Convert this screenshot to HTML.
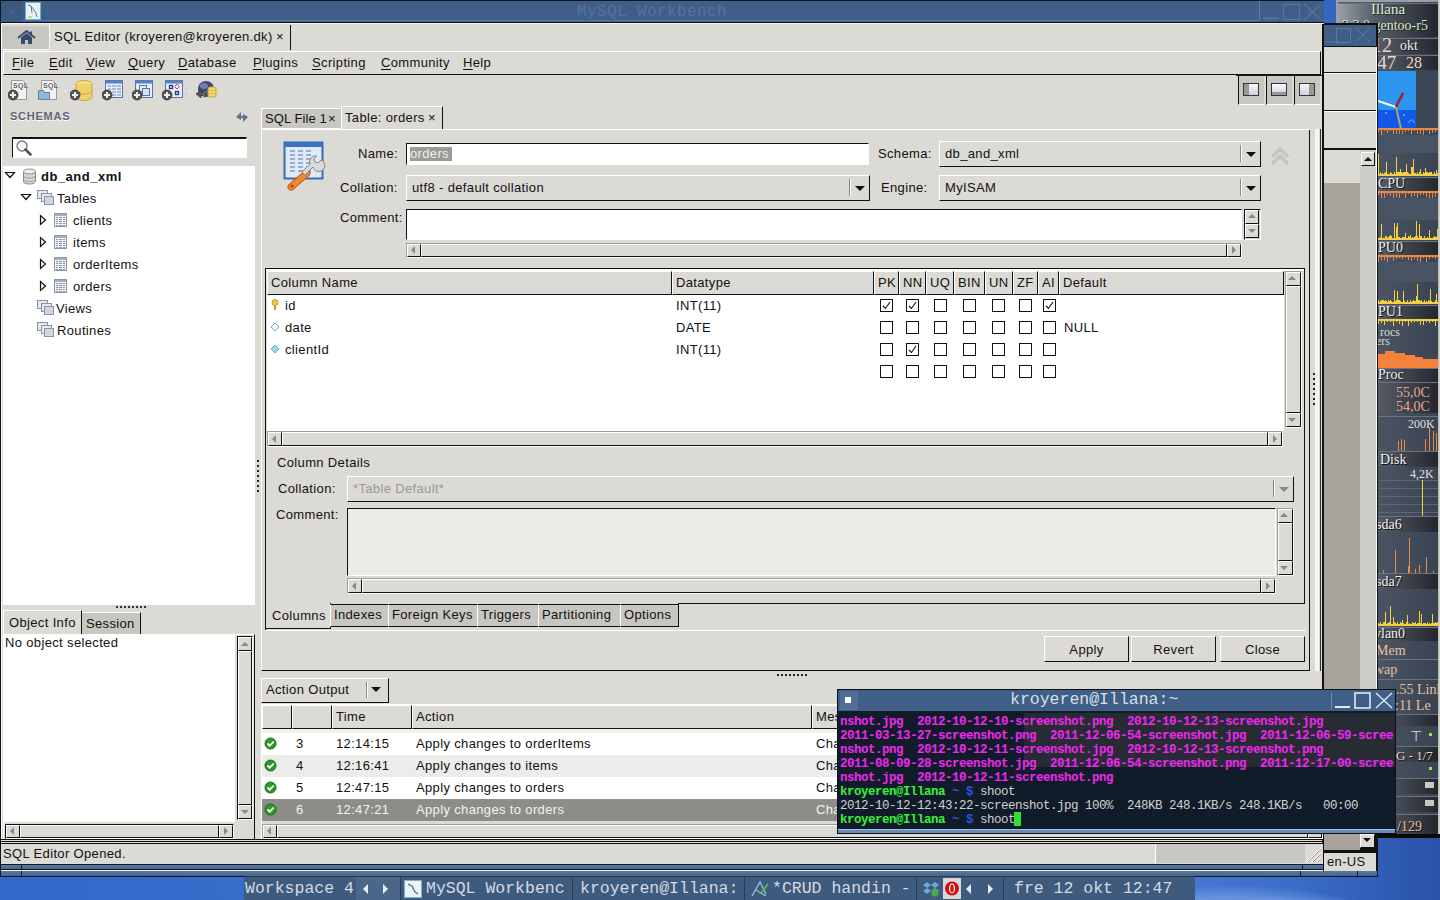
<!DOCTYPE html>
<html><head><meta charset="utf-8">
<style>
*{box-sizing:border-box;margin:0;padding:0}
html,body{width:1440px;height:900px;overflow:hidden;background:#3b6ac4;font-family:"Liberation Sans",sans-serif;font-size:13px;color:#111;letter-spacing:.35px}
.a{position:absolute}
.t{position:absolute;white-space:pre}
u{text-decoration:none;border-bottom:1px solid #111;display:inline-block;line-height:11px}
</style></head><body>

<div class="a" style="left:0px;top:0px;width:1440px;height:900px;background:radial-gradient(ellipse 230px 90px at 1230px 975px,rgba(120,160,230,.0) 70%,rgba(130,170,235,.6) 85%,rgba(120,160,230,0) 100%),linear-gradient(90deg,#3468c8 0%,#3f72d0 40%,#4a7ad4 80%,#3a6cc8 90%,#2a52a8 100%);"></div>
<div class="a" style="left:1336px;top:0px;width:104px;height:838px;background:#9aa0a8;"></div>
<div class="a" style="left:1338px;top:2px;width:100px;height:834px;background:linear-gradient(90deg,#56606e,#3a4352);"></div>
<div class="a" style="left:1438px;top:0px;width:1px;height:838px;background:#c0c0b8;"></div>
<div class="a" style="left:1439px;top:0px;width:1px;height:838px;background:#d0d0c8;"></div>
<div class="a" style="left:1336px;top:834px;width:104px;height:4px;background:#0a0a0a;"></div>
<div class="a" style="left:1338px;top:3px;width:100px;height:34px;background:linear-gradient(90deg,#9aa0a8 0%,#5a606c 35%,#24272e 100%);border-top:1px solid #6a7280"></div>
<div class="t" style="left:1371px;top:2px;font-size:15px;color:#d8f0d0;letter-spacing:0px;font-family:'Liberation Serif',serif;line-height:15px;text-shadow:1px 1px 0 #222">Illana</div>
<div class="t" style="left:1342px;top:19px;font-size:14px;color:#d0e8c8;letter-spacing:0px;font-family:'Liberation Serif',serif;line-height:14px;text-shadow:1px 1px 0 #222">3.3.0.gentoo-r5</div>
<div class="a" style="left:1338px;top:38px;width:100px;height:16px;background:linear-gradient(90deg,#9aa0a8 0%,#5a606c 35%,#24272e 100%);border-top:1px solid #6a7280"></div>
<div class="t" style="left:1372px;top:35px;font-size:20px;color:#e8dcc0;letter-spacing:0px;font-family:'Liberation Serif',serif;line-height:20px;">12</div>
<div class="t" style="left:1400px;top:39px;font-size:14px;color:#f0f0f0;letter-spacing:0px;font-family:'Liberation Serif',serif;line-height:14px;text-shadow:1px 1px 0 #111">okt</div>
<div class="a" style="left:1338px;top:55px;width:100px;height:15px;background:linear-gradient(90deg,#9aa0a8 0%,#5a606c 35%,#24272e 100%);border-top:1px solid #6a7280"></div>
<div class="t" style="left:1372px;top:53px;font-size:19px;color:#e8dcc0;letter-spacing:0px;font-family:'Liberation Serif',serif;line-height:19px;">:47</div>
<div class="t" style="left:1406px;top:55px;font-size:16px;color:#e8dcc0;letter-spacing:0px;font-family:'Liberation Serif',serif;line-height:16px;">28</div>
<div class="a" style="left:1378px;top:71px;width:38px;height:40px;background:#2b95f0;"></div>
<div class="a" style="left:1378px;top:110px;width:38px;height:18px;background:#1258e8;"></div>
<div class="a" style="left:1416px;top:71px;width:22px;height:57px;background:#3a4656;"></div>
<svg class="a" style="left:1378px;top:71px" width="38" height="57" viewBox="0 0 38 57"><path d="M0 30l18 6" stroke="#fff" stroke-width="2"/><path d="M18 36l7-14" stroke="#a02030" stroke-width="2.5"/><path d="M18 36l5 22" stroke="#b0a070" stroke-width="2"/><circle cx="8" cy="42" r="1" fill="#7ab0ff"/><circle cx="26" cy="44" r="1" fill="#7ab0ff"/><path d="M30 52c2-4 6-4 6 0" stroke="#6ac0ff" fill="none"/></svg>
<svg class="a" style="left:1378px;top:128px" width="60" height="7" viewBox="0 0 60 7"><rect x="0" y="0" width="60" height="2" fill="#e88a48"/><rect x="0" y="2" width="1" height="2" fill="#e88a48"/><rect x="3" y="2" width="1" height="5" fill="#e88a48"/><rect x="6" y="2" width="1" height="1" fill="#e88a48"/><rect x="9" y="2" width="1" height="3" fill="#e88a48"/><rect x="12" y="2" width="1" height="1" fill="#e88a48"/><rect x="15" y="2" width="1" height="4" fill="#e88a48"/><rect x="18" y="2" width="1" height="4" fill="#e88a48"/><rect x="21" y="2" width="1" height="4" fill="#e88a48"/><rect x="24" y="2" width="1" height="4" fill="#e88a48"/><rect x="27" y="2" width="1" height="2" fill="#e88a48"/><rect x="30" y="2" width="1" height="1" fill="#e88a48"/><rect x="33" y="2" width="1" height="4" fill="#e88a48"/><rect x="36" y="2" width="1" height="1" fill="#e88a48"/><rect x="39" y="2" width="1" height="4" fill="#e88a48"/><rect x="42" y="2" width="1" height="4" fill="#e88a48"/><rect x="45" y="2" width="1" height="5" fill="#e88a48"/><rect x="48" y="2" width="1" height="1" fill="#e88a48"/><rect x="51" y="2" width="1" height="4" fill="#e88a48"/><rect x="54" y="2" width="1" height="3" fill="#e88a48"/><rect x="57" y="2" width="1" height="2" fill="#e88a48"/></svg>
<div class="a" style="left:1378px;top:135px;width:60px;height:18px;background:#485464;"></div>
<svg class="a" style="left:1378px;top:153px" width="60" height="23" viewBox="0 0 60 23"><rect x="0" y="1" width="1" height="22" fill="#f4d040"/><rect x="1" y="21" width="1" height="2" fill="#f4d040"/><rect x="2" y="19" width="1" height="4" fill="#f4d040"/><rect x="3" y="21" width="1" height="2" fill="#f4d040"/><rect x="4" y="20" width="1" height="3" fill="#f4d040"/><rect x="5" y="21" width="1" height="2" fill="#f4d040"/><rect x="6" y="20" width="1" height="3" fill="#f4d040"/><rect x="7" y="19" width="1" height="4" fill="#f4d040"/><rect x="8" y="9" width="1" height="14" fill="#f4d040"/><rect x="9" y="21" width="1" height="2" fill="#f4d040"/><rect x="10" y="21" width="1" height="2" fill="#f4d040"/><rect x="11" y="21" width="1" height="2" fill="#f4d040"/><rect x="12" y="19" width="1" height="4" fill="#f4d040"/><rect x="13" y="20" width="1" height="3" fill="#f4d040"/><rect x="14" y="21" width="1" height="2" fill="#f4d040"/><rect x="15" y="21" width="1" height="2" fill="#f4d040"/><rect x="16" y="19" width="1" height="4" fill="#f4d040"/><rect x="17" y="21" width="1" height="2" fill="#f4d040"/><rect x="18" y="4" width="1" height="19" fill="#f4d040"/><rect x="19" y="19" width="1" height="4" fill="#f4d040"/><rect x="20" y="19" width="1" height="4" fill="#f4d040"/><rect x="21" y="19" width="1" height="4" fill="#f4d040"/><rect x="22" y="16" width="1" height="7" fill="#f4d040"/><rect x="23" y="19" width="1" height="4" fill="#f4d040"/><rect x="24" y="20" width="1" height="3" fill="#f4d040"/><rect x="25" y="19" width="1" height="4" fill="#f4d040"/><rect x="26" y="19" width="1" height="4" fill="#f4d040"/><rect x="27" y="19" width="1" height="4" fill="#f4d040"/><rect x="28" y="11" width="1" height="12" fill="#f4d040"/><rect x="29" y="19" width="1" height="4" fill="#f4d040"/><rect x="30" y="20" width="1" height="3" fill="#f4d040"/><rect x="31" y="21" width="1" height="2" fill="#f4d040"/><rect x="32" y="21" width="1" height="2" fill="#f4d040"/><rect x="33" y="14" width="1" height="9" fill="#f4d040"/><rect x="34" y="14" width="1" height="9" fill="#f4d040"/><rect x="35" y="6" width="1" height="17" fill="#f4d040"/><rect x="36" y="20" width="1" height="3" fill="#f4d040"/><rect x="37" y="20" width="1" height="3" fill="#f4d040"/><rect x="38" y="21" width="1" height="2" fill="#f4d040"/><rect x="39" y="19" width="1" height="4" fill="#f4d040"/><rect x="40" y="21" width="1" height="2" fill="#f4d040"/><rect x="41" y="19" width="1" height="4" fill="#f4d040"/><rect x="42" y="16" width="1" height="7" fill="#f4d040"/><rect x="43" y="21" width="1" height="2" fill="#f4d040"/><rect x="44" y="21" width="1" height="2" fill="#f4d040"/><rect x="45" y="19" width="1" height="4" fill="#f4d040"/><rect x="46" y="20" width="1" height="3" fill="#f4d040"/><rect x="47" y="15" width="1" height="8" fill="#f4d040"/><rect x="48" y="19" width="1" height="4" fill="#f4d040"/><rect x="49" y="19" width="1" height="4" fill="#f4d040"/><rect x="50" y="20" width="1" height="3" fill="#f4d040"/><rect x="51" y="19" width="1" height="4" fill="#f4d040"/><rect x="52" y="19" width="1" height="4" fill="#f4d040"/><rect x="53" y="19" width="1" height="4" fill="#f4d040"/><rect x="54" y="21" width="1" height="2" fill="#f4d040"/><rect x="55" y="21" width="1" height="2" fill="#f4d040"/><rect x="56" y="19" width="1" height="4" fill="#f4d040"/><rect x="57" y="21" width="1" height="2" fill="#f4d040"/><rect x="58" y="17" width="1" height="6" fill="#f4d040"/><rect x="59" y="20" width="1" height="3" fill="#f4d040"/></svg>
<div class="a" style="left:1338px;top:177px;width:100px;height:14px;background:linear-gradient(90deg,#9aa0a8 0%,#5a606c 35%,#24272e 100%);border-top:1px solid #6a7280"></div>
<div class="t" style="left:1378px;top:177px;font-size:14px;color:#f0f0f0;letter-spacing:0px;font-family:'Liberation Serif',serif;line-height:14px;text-shadow:1px 1px 0 #111">CPU</div>
<svg class="a" style="left:1378px;top:191px" width="60" height="7" viewBox="0 0 60 7"><rect x="0" y="0" width="60" height="2" fill="#e88a48"/><rect x="0" y="2" width="1" height="2" fill="#e88a48"/><rect x="3" y="2" width="1" height="5" fill="#e88a48"/><rect x="6" y="2" width="1" height="5" fill="#e88a48"/><rect x="9" y="2" width="1" height="2" fill="#e88a48"/><rect x="12" y="2" width="1" height="3" fill="#e88a48"/><rect x="15" y="2" width="1" height="5" fill="#e88a48"/><rect x="18" y="2" width="1" height="4" fill="#e88a48"/><rect x="21" y="2" width="1" height="5" fill="#e88a48"/><rect x="24" y="2" width="1" height="1" fill="#e88a48"/><rect x="27" y="2" width="1" height="5" fill="#e88a48"/><rect x="30" y="2" width="1" height="1" fill="#e88a48"/><rect x="33" y="2" width="1" height="4" fill="#e88a48"/><rect x="36" y="2" width="1" height="3" fill="#e88a48"/><rect x="39" y="2" width="1" height="5" fill="#e88a48"/><rect x="42" y="2" width="1" height="2" fill="#e88a48"/><rect x="45" y="2" width="1" height="2" fill="#e88a48"/><rect x="48" y="2" width="1" height="4" fill="#e88a48"/><rect x="51" y="2" width="1" height="5" fill="#e88a48"/><rect x="54" y="2" width="1" height="5" fill="#e88a48"/><rect x="57" y="2" width="1" height="4" fill="#e88a48"/></svg>
<div class="a" style="left:1378px;top:198px;width:60px;height:22px;background:#485464;"></div>
<svg class="a" style="left:1378px;top:220px" width="60" height="20" viewBox="0 0 60 20"><rect x="0" y="18" width="1" height="2" fill="#f4d040"/><rect x="1" y="18" width="1" height="2" fill="#f4d040"/><rect x="2" y="17" width="1" height="3" fill="#f4d040"/><rect x="3" y="4" width="1" height="16" fill="#f4d040"/><rect x="4" y="18" width="1" height="2" fill="#f4d040"/><rect x="5" y="18" width="1" height="2" fill="#f4d040"/><rect x="6" y="18" width="1" height="2" fill="#f4d040"/><rect x="7" y="16" width="1" height="4" fill="#f4d040"/><rect x="8" y="16" width="1" height="4" fill="#f4d040"/><rect x="9" y="18" width="1" height="2" fill="#f4d040"/><rect x="10" y="17" width="1" height="3" fill="#f4d040"/><rect x="11" y="16" width="1" height="4" fill="#f4d040"/><rect x="12" y="15" width="1" height="5" fill="#f4d040"/><rect x="13" y="16" width="1" height="4" fill="#f4d040"/><rect x="14" y="18" width="1" height="2" fill="#f4d040"/><rect x="15" y="18" width="1" height="2" fill="#f4d040"/><rect x="16" y="3" width="1" height="17" fill="#f4d040"/><rect x="17" y="18" width="1" height="2" fill="#f4d040"/><rect x="18" y="7" width="1" height="13" fill="#f4d040"/><rect x="19" y="3" width="1" height="17" fill="#f4d040"/><rect x="20" y="17" width="1" height="3" fill="#f4d040"/><rect x="21" y="17" width="1" height="3" fill="#f4d040"/><rect x="22" y="18" width="1" height="2" fill="#f4d040"/><rect x="23" y="18" width="1" height="2" fill="#f4d040"/><rect x="24" y="17" width="1" height="3" fill="#f4d040"/><rect x="25" y="17" width="1" height="3" fill="#f4d040"/><rect x="26" y="17" width="1" height="3" fill="#f4d040"/><rect x="27" y="13" width="1" height="7" fill="#f4d040"/><rect x="28" y="18" width="1" height="2" fill="#f4d040"/><rect x="29" y="18" width="1" height="2" fill="#f4d040"/><rect x="30" y="16" width="1" height="4" fill="#f4d040"/><rect x="31" y="17" width="1" height="3" fill="#f4d040"/><rect x="32" y="15" width="1" height="5" fill="#f4d040"/><rect x="33" y="18" width="1" height="2" fill="#f4d040"/><rect x="34" y="17" width="1" height="3" fill="#f4d040"/><rect x="35" y="18" width="1" height="2" fill="#f4d040"/><rect x="36" y="17" width="1" height="3" fill="#f4d040"/><rect x="37" y="16" width="1" height="4" fill="#f4d040"/><rect x="38" y="1" width="1" height="19" fill="#f4d040"/><rect x="39" y="16" width="1" height="4" fill="#f4d040"/><rect x="40" y="18" width="1" height="2" fill="#f4d040"/><rect x="41" y="4" width="1" height="16" fill="#f4d040"/><rect x="42" y="16" width="1" height="4" fill="#f4d040"/><rect x="43" y="16" width="1" height="4" fill="#f4d040"/><rect x="44" y="18" width="1" height="2" fill="#f4d040"/><rect x="45" y="18" width="1" height="2" fill="#f4d040"/><rect x="46" y="16" width="1" height="4" fill="#f4d040"/><rect x="47" y="18" width="1" height="2" fill="#f4d040"/><rect x="48" y="18" width="1" height="2" fill="#f4d040"/><rect x="49" y="17" width="1" height="3" fill="#f4d040"/><rect x="50" y="18" width="1" height="2" fill="#f4d040"/><rect x="51" y="10" width="1" height="10" fill="#f4d040"/><rect x="52" y="18" width="1" height="2" fill="#f4d040"/><rect x="53" y="18" width="1" height="2" fill="#f4d040"/><rect x="54" y="18" width="1" height="2" fill="#f4d040"/><rect x="55" y="17" width="1" height="3" fill="#f4d040"/><rect x="56" y="16" width="1" height="4" fill="#f4d040"/><rect x="57" y="17" width="1" height="3" fill="#f4d040"/><rect x="58" y="17" width="1" height="3" fill="#f4d040"/><rect x="59" y="9" width="1" height="11" fill="#f4d040"/></svg>
<div class="a" style="left:1338px;top:241px;width:100px;height:14px;background:linear-gradient(90deg,#9aa0a8 0%,#5a606c 35%,#24272e 100%);border-top:1px solid #6a7280"></div>
<div class="t" style="left:1378px;top:241px;font-size:14px;color:#f0f0f0;letter-spacing:0px;font-family:'Liberation Serif',serif;line-height:14px;text-shadow:1px 1px 0 #111">PU0</div>
<svg class="a" style="left:1378px;top:255px" width="60" height="7" viewBox="0 0 60 7"><rect x="0" y="0" width="60" height="2" fill="#e88a48"/><rect x="0" y="2" width="1" height="5" fill="#e88a48"/><rect x="3" y="2" width="1" height="3" fill="#e88a48"/><rect x="6" y="2" width="1" height="3" fill="#e88a48"/><rect x="9" y="2" width="1" height="5" fill="#e88a48"/><rect x="12" y="2" width="1" height="1" fill="#e88a48"/><rect x="15" y="2" width="1" height="4" fill="#e88a48"/><rect x="18" y="2" width="1" height="2" fill="#e88a48"/><rect x="21" y="2" width="1" height="1" fill="#e88a48"/><rect x="24" y="2" width="1" height="2" fill="#e88a48"/><rect x="27" y="2" width="1" height="1" fill="#e88a48"/><rect x="30" y="2" width="1" height="3" fill="#e88a48"/><rect x="33" y="2" width="1" height="4" fill="#e88a48"/><rect x="36" y="2" width="1" height="2" fill="#e88a48"/><rect x="39" y="2" width="1" height="4" fill="#e88a48"/><rect x="42" y="2" width="1" height="5" fill="#e88a48"/><rect x="45" y="2" width="1" height="1" fill="#e88a48"/><rect x="48" y="2" width="1" height="5" fill="#e88a48"/><rect x="51" y="2" width="1" height="2" fill="#e88a48"/><rect x="54" y="2" width="1" height="1" fill="#e88a48"/><rect x="57" y="2" width="1" height="2" fill="#e88a48"/></svg>
<div class="a" style="left:1378px;top:262px;width:60px;height:20px;background:#485464;"></div>
<svg class="a" style="left:1378px;top:282px" width="60" height="22" viewBox="0 0 60 22"><rect x="0" y="18" width="1" height="4" fill="#f4d040"/><rect x="1" y="20" width="1" height="2" fill="#f4d040"/><rect x="2" y="19" width="1" height="3" fill="#f4d040"/><rect x="3" y="18" width="1" height="4" fill="#f4d040"/><rect x="4" y="18" width="1" height="4" fill="#f4d040"/><rect x="5" y="18" width="1" height="4" fill="#f4d040"/><rect x="6" y="19" width="1" height="3" fill="#f4d040"/><rect x="7" y="18" width="1" height="4" fill="#f4d040"/><rect x="8" y="19" width="1" height="3" fill="#f4d040"/><rect x="9" y="20" width="1" height="2" fill="#f4d040"/><rect x="10" y="18" width="1" height="4" fill="#f4d040"/><rect x="11" y="19" width="1" height="3" fill="#f4d040"/><rect x="12" y="18" width="1" height="4" fill="#f4d040"/><rect x="13" y="19" width="1" height="3" fill="#f4d040"/><rect x="14" y="20" width="1" height="2" fill="#f4d040"/><rect x="15" y="20" width="1" height="2" fill="#f4d040"/><rect x="16" y="8" width="1" height="14" fill="#f4d040"/><rect x="17" y="19" width="1" height="3" fill="#f4d040"/><rect x="18" y="18" width="1" height="4" fill="#f4d040"/><rect x="19" y="9" width="1" height="13" fill="#f4d040"/><rect x="20" y="18" width="1" height="4" fill="#f4d040"/><rect x="21" y="18" width="1" height="4" fill="#f4d040"/><rect x="22" y="19" width="1" height="3" fill="#f4d040"/><rect x="23" y="20" width="1" height="2" fill="#f4d040"/><rect x="24" y="20" width="1" height="2" fill="#f4d040"/><rect x="25" y="9" width="1" height="13" fill="#f4d040"/><rect x="26" y="19" width="1" height="3" fill="#f4d040"/><rect x="27" y="20" width="1" height="2" fill="#f4d040"/><rect x="28" y="20" width="1" height="2" fill="#f4d040"/><rect x="29" y="18" width="1" height="4" fill="#f4d040"/><rect x="30" y="20" width="1" height="2" fill="#f4d040"/><rect x="31" y="20" width="1" height="2" fill="#f4d040"/><rect x="32" y="18" width="1" height="4" fill="#f4d040"/><rect x="33" y="20" width="1" height="2" fill="#f4d040"/><rect x="34" y="19" width="1" height="3" fill="#f4d040"/><rect x="35" y="18" width="1" height="4" fill="#f4d040"/><rect x="36" y="19" width="1" height="3" fill="#f4d040"/><rect x="37" y="19" width="1" height="3" fill="#f4d040"/><rect x="38" y="14" width="1" height="8" fill="#f4d040"/><rect x="39" y="2" width="1" height="20" fill="#f4d040"/><rect x="40" y="18" width="1" height="4" fill="#f4d040"/><rect x="41" y="18" width="1" height="4" fill="#f4d040"/><rect x="42" y="19" width="1" height="3" fill="#f4d040"/><rect x="43" y="18" width="1" height="4" fill="#f4d040"/><rect x="44" y="20" width="1" height="2" fill="#f4d040"/><rect x="45" y="20" width="1" height="2" fill="#f4d040"/><rect x="46" y="18" width="1" height="4" fill="#f4d040"/><rect x="47" y="20" width="1" height="2" fill="#f4d040"/><rect x="48" y="19" width="1" height="3" fill="#f4d040"/><rect x="49" y="20" width="1" height="2" fill="#f4d040"/><rect x="50" y="18" width="1" height="4" fill="#f4d040"/><rect x="51" y="19" width="1" height="3" fill="#f4d040"/><rect x="52" y="7" width="1" height="15" fill="#f4d040"/><rect x="53" y="19" width="1" height="3" fill="#f4d040"/><rect x="54" y="20" width="1" height="2" fill="#f4d040"/><rect x="55" y="20" width="1" height="2" fill="#f4d040"/><rect x="56" y="20" width="1" height="2" fill="#f4d040"/><rect x="57" y="18" width="1" height="4" fill="#f4d040"/><rect x="58" y="12" width="1" height="10" fill="#f4d040"/><rect x="59" y="20" width="1" height="2" fill="#f4d040"/></svg>
<div class="a" style="left:1338px;top:305px;width:100px;height:14px;background:linear-gradient(90deg,#9aa0a8 0%,#5a606c 35%,#24272e 100%);border-top:1px solid #6a7280"></div>
<div class="t" style="left:1378px;top:305px;font-size:14px;color:#f0f0f0;letter-spacing:0px;font-family:'Liberation Serif',serif;line-height:14px;text-shadow:1px 1px 0 #111">PU1</div>
<svg class="a" style="left:1378px;top:319px" width="60" height="7" viewBox="0 0 60 7"><rect x="0" y="0" width="60" height="2" fill="#f4d040"/><rect x="0" y="2" width="1" height="3" fill="#f4d040"/><rect x="3" y="2" width="1" height="2" fill="#f4d040"/><rect x="6" y="2" width="1" height="4" fill="#f4d040"/><rect x="9" y="2" width="1" height="1" fill="#f4d040"/><rect x="12" y="2" width="1" height="1" fill="#f4d040"/><rect x="15" y="2" width="1" height="5" fill="#f4d040"/><rect x="18" y="2" width="1" height="1" fill="#f4d040"/><rect x="21" y="2" width="1" height="3" fill="#f4d040"/><rect x="24" y="2" width="1" height="5" fill="#f4d040"/><rect x="27" y="2" width="1" height="1" fill="#f4d040"/><rect x="30" y="2" width="1" height="5" fill="#f4d040"/><rect x="33" y="2" width="1" height="2" fill="#f4d040"/><rect x="36" y="2" width="1" height="1" fill="#f4d040"/><rect x="39" y="2" width="1" height="1" fill="#f4d040"/><rect x="42" y="2" width="1" height="4" fill="#f4d040"/><rect x="45" y="2" width="1" height="4" fill="#f4d040"/><rect x="48" y="2" width="1" height="1" fill="#f4d040"/><rect x="51" y="2" width="1" height="2" fill="#f4d040"/><rect x="54" y="2" width="1" height="1" fill="#f4d040"/><rect x="57" y="2" width="1" height="5" fill="#f4d040"/></svg>
<div class="t" style="left:1380px;top:326px;font-size:12px;color:#d8d8d8;letter-spacing:0px;font-family:'Liberation Serif',serif;line-height:12px;">rocs</div>
<div class="t" style="left:1376px;top:335px;font-size:12px;color:#d8d8d8;letter-spacing:0px;font-family:'Liberation Serif',serif;line-height:12px;">ers</div>
<svg class="a" style="left:1378px;top:350px" width="60" height="18" viewBox="0 0 60 18"><path d="M0 18V4h7V1h10v2h10v2h10v2h8v2h15v9z" fill="#f4823a"/></svg>
<div class="a" style="left:1338px;top:368px;width:100px;height:14px;background:linear-gradient(90deg,#9aa0a8 0%,#5a606c 35%,#24272e 100%);border-top:1px solid #6a7280"></div>
<div class="t" style="left:1378px;top:368px;font-size:14px;color:#f0f0f0;letter-spacing:0px;font-family:'Liberation Serif',serif;line-height:14px;text-shadow:1px 1px 0 #111">Proc</div>
<div class="a" style="left:1338px;top:382px;width:100px;height:31px;background:linear-gradient(90deg,#9aa0a8 0%,#5a606c 35%,#24272e 100%);border-top:1px solid #6a7280"></div>
<div class="t" style="left:1396px;top:386px;font-size:14px;color:#e8a890;letter-spacing:0px;font-family:'Liberation Serif',serif;line-height:14px;">55,0C</div>
<div class="t" style="left:1396px;top:400px;font-size:14px;color:#e8a890;letter-spacing:0px;font-family:'Liberation Serif',serif;line-height:14px;">54,0C</div>
<div class="a" style="left:1378px;top:416px;width:60px;height:1px;background:#6a7280;"></div>
<div class="t" style="left:1408px;top:418px;font-size:12px;color:#e0e0e0;letter-spacing:0px;font-family:'Liberation Serif',serif;line-height:12px;">200K</div>
<svg class="a" style="left:1378px;top:425px" width="60" height="26" viewBox="0 0 60 26"><g fill="#e88a48"><rect x="20" y="16" width="1" height="10"/><rect x="23" y="14" width="1" height="12"/><rect x="26" y="15" width="1" height="11"/><rect x="47" y="14" width="1" height="12"/><rect x="51" y="2" width="1" height="24"/><rect x="55" y="6" width="1" height="20"/><rect x="58" y="8" width="1" height="18"/></g></svg>
<div class="a" style="left:1338px;top:451px;width:100px;height:16px;background:linear-gradient(90deg,#9aa0a8 0%,#5a606c 35%,#24272e 100%);border-top:1px solid #6a7280"></div>
<div class="t" style="left:1380px;top:453px;font-size:14px;color:#f0f0f0;letter-spacing:0px;font-family:'Liberation Serif',serif;line-height:14px;text-shadow:1px 1px 0 #111">Disk</div>
<div class="t" style="left:1410px;top:468px;font-size:12px;color:#e0e0e0;letter-spacing:0px;font-family:'Liberation Serif',serif;line-height:12px;">4,2K</div>
<div class="a" style="left:1378px;top:480px;width:60px;height:1px;background:#5a6676;"></div>
<div class="a" style="left:1378px;top:488px;width:60px;height:1px;background:#5a6676;"></div>
<div class="a" style="left:1378px;top:496px;width:60px;height:1px;background:#5a6676;"></div>
<div class="a" style="left:1378px;top:504px;width:60px;height:1px;background:#5a6676;"></div>
<div class="a" style="left:1378px;top:512px;width:60px;height:1px;background:#5a6676;"></div>
<div class="a" style="left:1422px;top:480px;width:1px;height:36px;background:#f4d040;"></div>
<div class="a" style="left:1338px;top:516px;width:100px;height:16px;background:linear-gradient(90deg,#9aa0a8 0%,#5a606c 35%,#24272e 100%);border-top:1px solid #6a7280"></div>
<div class="t" style="left:1376px;top:518px;font-size:14px;color:#f0f0f0;letter-spacing:0px;font-family:'Liberation Serif',serif;line-height:14px;text-shadow:1px 1px 0 #111">sda6</div>
<svg class="a" style="left:1378px;top:533px" width="60" height="40" viewBox="0 0 60 40"><rect x="5" y="37" width="1" height="3" fill="#e88a48"/><rect x="17" y="17" width="1" height="23" fill="#e88a48"/><rect x="30" y="33" width="1" height="7" fill="#e88a48"/><rect x="31" y="5" width="1" height="35" fill="#e88a48"/><rect x="37" y="36" width="1" height="4" fill="#e88a48"/><rect x="41" y="32" width="1" height="8" fill="#e88a48"/><rect x="48" y="24" width="1" height="16" fill="#e88a48"/><rect x="55" y="38" width="1" height="2" fill="#e88a48"/></svg>
<div class="a" style="left:1338px;top:573px;width:100px;height:16px;background:linear-gradient(90deg,#9aa0a8 0%,#5a606c 35%,#24272e 100%);border-top:1px solid #6a7280"></div>
<div class="t" style="left:1376px;top:575px;font-size:14px;color:#f0f0f0;letter-spacing:0px;font-family:'Liberation Serif',serif;line-height:14px;text-shadow:1px 1px 0 #111">sda7</div>
<svg class="a" style="left:1378px;top:605px" width="60" height="21" viewBox="0 0 60 21"><rect x="0" y="18" width="1" height="3" fill="#f4d040"/><rect x="1" y="19" width="1" height="2" fill="#f4d040"/><rect x="2" y="17" width="1" height="4" fill="#f4d040"/><rect x="3" y="19" width="1" height="2" fill="#f4d040"/><rect x="4" y="19" width="1" height="2" fill="#f4d040"/><rect x="5" y="17" width="1" height="4" fill="#f4d040"/><rect x="6" y="17" width="1" height="4" fill="#f4d040"/><rect x="7" y="7" width="1" height="14" fill="#f4d040"/><rect x="8" y="19" width="1" height="2" fill="#f4d040"/><rect x="9" y="18" width="1" height="3" fill="#f4d040"/><rect x="10" y="18" width="1" height="3" fill="#f4d040"/><rect x="11" y="17" width="1" height="4" fill="#f4d040"/><rect x="12" y="1" width="1" height="20" fill="#f4d040"/><rect x="13" y="19" width="1" height="2" fill="#f4d040"/><rect x="14" y="19" width="1" height="2" fill="#f4d040"/><rect x="15" y="12" width="1" height="9" fill="#f4d040"/><rect x="16" y="17" width="1" height="4" fill="#f4d040"/><rect x="17" y="18" width="1" height="3" fill="#f4d040"/><rect x="18" y="19" width="1" height="2" fill="#f4d040"/><rect x="19" y="17" width="1" height="4" fill="#f4d040"/><rect x="20" y="19" width="1" height="2" fill="#f4d040"/><rect x="21" y="19" width="1" height="2" fill="#f4d040"/><rect x="22" y="17" width="1" height="4" fill="#f4d040"/><rect x="23" y="18" width="1" height="3" fill="#f4d040"/><rect x="24" y="15" width="1" height="6" fill="#f4d040"/><rect x="25" y="18" width="1" height="3" fill="#f4d040"/><rect x="26" y="19" width="1" height="2" fill="#f4d040"/><rect x="27" y="19" width="1" height="2" fill="#f4d040"/><rect x="28" y="17" width="1" height="4" fill="#f4d040"/><rect x="29" y="10" width="1" height="11" fill="#f4d040"/><rect x="30" y="19" width="1" height="2" fill="#f4d040"/><rect x="31" y="18" width="1" height="3" fill="#f4d040"/><rect x="32" y="19" width="1" height="2" fill="#f4d040"/><rect x="33" y="19" width="1" height="2" fill="#f4d040"/><rect x="34" y="17" width="1" height="4" fill="#f4d040"/><rect x="35" y="18" width="1" height="3" fill="#f4d040"/><rect x="36" y="18" width="1" height="3" fill="#f4d040"/><rect x="37" y="17" width="1" height="4" fill="#f4d040"/><rect x="38" y="19" width="1" height="2" fill="#f4d040"/><rect x="39" y="18" width="1" height="3" fill="#f4d040"/><rect x="40" y="18" width="1" height="3" fill="#f4d040"/><rect x="41" y="6" width="1" height="15" fill="#f4d040"/><rect x="42" y="18" width="1" height="3" fill="#f4d040"/><rect x="43" y="9" width="1" height="12" fill="#f4d040"/><rect x="44" y="19" width="1" height="2" fill="#f4d040"/><rect x="45" y="18" width="1" height="3" fill="#f4d040"/><rect x="46" y="18" width="1" height="3" fill="#f4d040"/><rect x="47" y="18" width="1" height="3" fill="#f4d040"/><rect x="48" y="19" width="1" height="2" fill="#f4d040"/><rect x="49" y="17" width="1" height="4" fill="#f4d040"/><rect x="50" y="19" width="1" height="2" fill="#f4d040"/><rect x="51" y="18" width="1" height="3" fill="#f4d040"/><rect x="52" y="19" width="1" height="2" fill="#f4d040"/><rect x="53" y="18" width="1" height="3" fill="#f4d040"/><rect x="54" y="9" width="1" height="12" fill="#f4d040"/><rect x="55" y="18" width="1" height="3" fill="#f4d040"/><rect x="56" y="18" width="1" height="3" fill="#f4d040"/><rect x="57" y="17" width="1" height="4" fill="#f4d040"/><rect x="58" y="18" width="1" height="3" fill="#f4d040"/><rect x="59" y="17" width="1" height="4" fill="#f4d040"/></svg>
<div class="a" style="left:1338px;top:627px;width:100px;height:14px;background:linear-gradient(90deg,#9aa0a8 0%,#5a606c 35%,#24272e 100%);border-top:1px solid #6a7280"></div>
<div class="t" style="left:1374px;top:627px;font-size:14px;color:#f0f0f0;letter-spacing:0px;font-family:'Liberation Serif',serif;line-height:14px;text-shadow:1px 1px 0 #111">vlan0</div>
<div class="t" style="left:1376px;top:644px;font-size:14px;color:#e8c0a0;letter-spacing:0px;font-family:'Liberation Serif',serif;line-height:14px;">Mem</div>
<div class="a" style="left:1378px;top:659px;width:60px;height:1px;background:#6a7280;"></div>
<div class="t" style="left:1374px;top:663px;font-size:14px;color:#e8c0a0;letter-spacing:0px;font-family:'Liberation Serif',serif;line-height:14px;">wap</div>
<div class="a" style="left:1378px;top:679px;width:60px;height:1px;background:#6a7280;"></div>
<div class="t" style="left:1396px;top:683px;font-size:14px;color:#e8c0a0;letter-spacing:0px;font-family:'Liberation Serif',serif;line-height:14px;">.55 Link</div>
<div class="t" style="left:1395px;top:699px;font-size:14px;color:#e8c0a0;letter-spacing:0px;font-family:'Liberation Serif',serif;line-height:14px;">:11 Le</div>
<div class="a" style="left:1338px;top:714px;width:100px;height:12px;background:linear-gradient(90deg,#9aa0a8 0%,#5a606c 35%,#24272e 100%);border-top:1px solid #6a7280"></div>
<div class="t" style="left:1410px;top:730px;font-size:14px;color:#e0e0e0;letter-spacing:0px;font-family:'Liberation Serif',serif;line-height:14px;">⊤</div>
<div class="a" style="left:1429px;top:733px;width:3px;height:3px;background:#a0e040;"></div>
<div class="a" style="left:1338px;top:746px;width:100px;height:16px;background:linear-gradient(90deg,#9aa0a8 0%,#5a606c 35%,#24272e 100%);border-top:1px solid #6a7280"></div>
<div class="t" style="left:1396px;top:749px;font-size:13px;color:#e8dcc0;letter-spacing:0px;font-family:'Liberation Serif',serif;line-height:13px;text-shadow:1px 1px 0 #111">G - 1/7</div>
<div class="a" style="left:1429px;top:767px;width:3px;height:3px;background:#a0e040;"></div>
<div class="a" style="left:1338px;top:778px;width:100px;height:16px;background:linear-gradient(90deg,#9aa0a8 0%,#5a606c 35%,#24272e 100%);border-top:1px solid #6a7280"></div>
<div class="a" style="left:1425px;top:782px;width:9px;height:6px;background:#c8c8c8;"></div>
<div class="a" style="left:1338px;top:796px;width:100px;height:16px;background:linear-gradient(90deg,#9aa0a8 0%,#5a606c 35%,#24272e 100%);border-top:1px solid #6a7280"></div>
<div class="a" style="left:1425px;top:800px;width:9px;height:6px;background:#c8c8c8;"></div>
<div class="a" style="left:1338px;top:814px;width:100px;height:20px;background:linear-gradient(90deg,#9aa0a8 0%,#5a606c 35%,#24272e 100%);border-top:1px solid #6a7280"></div>
<div class="t" style="left:1397px;top:820px;font-size:14px;color:#e8c0a0;letter-spacing:0px;font-family:'Liberation Serif',serif;line-height:14px;text-shadow:1px 1px 0 #111">/129</div>
<div class="a" style="left:1323px;top:23px;width:55px;height:849px;background:#111;"></div>
<div class="a" style="left:1324px;top:24px;width:52px;height:22px;background:#3d5d85;"></div>
<div class="a" style="left:1324px;top:47px;width:52px;height:825px;background:#dcdad5;"></div>
<div class="a" style="left:0px;top:0px;width:1324px;height:876px;background:#dcdad5;"></div>
<div class="a" style="left:0px;top:0px;width:1324px;height:23px;background:#3f5f86;border-top:1px solid #0d1520;border-bottom:1px solid #0d1520"></div>
<div class="a" style="left:0px;top:1px;width:22px;height:21px;background:#3b5981;"></div>
<div class="a" style="left:25px;top:2px;width:16px;height:18px;background:#e8f4fa;border:1px solid #6ab0d0"></div>
<svg class="a" style="left:26px;top:3px" width="14" height="16" viewBox="0 0 14 16"><path d="M2 2l3 1 1 7M5 3l3 4 2 3 1 4" fill="none" stroke="#667788" stroke-width="1"/><path d="M2 14h4" stroke="#e0a030"/></svg>
<div class="a" style="left:10px;top:10px;width:3px;height:3px;background:#4a6890;"></div>
<svg class="a" style="left:1258px;top:1px" width="65" height="21" viewBox="0 0 65 21"><path d="M1.5 0v20M0 19.5h2" stroke="#5f7fa5"/><path d="M5 17.5h16" stroke="#56769c" stroke-width="2"/><rect x="25.5" y="3.5" width="16" height="15" fill="none" stroke="#56769c" stroke-width="1.2"/><path d="M46 3l17 16M63 3L46 19" stroke="#56769c" stroke-width="1.2"/></svg>
<div class="a" style="left:22px;top:20px;width:1237px;height:1px;background:#56769c;"></div>
<div class="t" style="left:577px;top:4px;font-size:16px;color:#54739b;letter-spacing:0.4px;font-family:'Liberation Mono',monospace;line-height:16px;">MySQL Workbench</div>
<div class="a" style="left:0px;top:0px;width:1px;height:876px;background:#0d1520;"></div>
<div class="a" style="left:1px;top:23px;width:1px;height:841px;background:#fafafa;"></div>
<div class="a" style="left:1px;top:49px;width:48px;height:1px;background:#fafafa;"></div>
<div class="a" style="left:1px;top:23px;width:1323px;height:1px;background:#f5f4f2;"></div>
<div class="a" style="left:2px;top:26px;width:47px;height:23px;background:#c8c6c1;"></div>
<svg class="a" style="left:17px;top:30px" width="19" height="15" viewBox="0 0 19 15"><path d="M1 8L9.5 1 18 8" fill="none" stroke="#3a4a6a" stroke-width="2"/><path d="M4 7.5L9.5 3 15 7.5V14H11V10H8V14H4z" fill="#3a4a6a"/><rect x="13" y="1.5" width="2" height="4" fill="#3a4a6a"/></svg>
<div class="a" style="left:290px;top:25px;width:1px;height:25px;background:#111;"></div>
<div class="a" style="left:49px;top:24px;width:1px;height:26px;background:#fafafa;"></div>
<div class="t" style="left:54px;top:30px;font-size:13px;color:#111;line-height:13px;">SQL Editor (kroyeren@kroyeren.dk)</div>
<div class="t" style="left:276px;top:30px;font-size:13px;color:#111;line-height:13px;">×</div>
<div class="a" style="left:3px;top:51px;width:1318px;height:24px;background:#dcdad5;border:1px solid;border-color:#fff #111 #111 #fff;"></div>
<div class="t" style="left:12px;top:55px;font-size:13px;line-height:15px"><span style="text-decoration:underline;text-underline-offset:2px">F</span>ile</div>
<div class="t" style="left:49px;top:55px;font-size:13px;line-height:15px"><span style="text-decoration:underline;text-underline-offset:2px">E</span>dit</div>
<div class="t" style="left:86px;top:55px;font-size:13px;line-height:15px"><span style="text-decoration:underline;text-underline-offset:2px">V</span>iew</div>
<div class="t" style="left:128px;top:55px;font-size:13px;line-height:15px"><span style="text-decoration:underline;text-underline-offset:2px">Q</span>uery</div>
<div class="t" style="left:178px;top:55px;font-size:13px;line-height:15px"><span style="text-decoration:underline;text-underline-offset:2px">D</span>atabase</div>
<div class="t" style="left:253px;top:55px;font-size:13px;line-height:15px"><span style="text-decoration:underline;text-underline-offset:2px">P</span>lugins</div>
<div class="t" style="left:312px;top:55px;font-size:13px;line-height:15px"><span style="text-decoration:underline;text-underline-offset:2px">S</span>cripting</div>
<div class="t" style="left:381px;top:55px;font-size:13px;line-height:15px"><span style="text-decoration:underline;text-underline-offset:2px">C</span>ommunity</div>
<div class="t" style="left:463px;top:55px;font-size:13px;line-height:15px"><span style="text-decoration:underline;text-underline-offset:2px">H</span>elp</div>
<div class="a" style="left:1px;top:75px;width:1323px;height:1px;background:#dcdad5;"></div>
<svg class="a" style="left:8px;top:80px" width="22" height="21" viewBox="0 0 22 21"><path d="M3.5 0.5h11l4 4v15h-15z" fill="#f2f2f2" stroke="#999"/><text x="5" y="8" font-size="7" font-weight="bold" fill="#666" font-family="Liberation Sans">SQL</text><circle cx="5" cy="15" r="5" fill="#555" stroke="#333" stroke-width="0.8"/><path d="M2 15h6M5 12v6" stroke="#eee" stroke-width="2"/></svg>
<svg class="a" style="left:38px;top:80px" width="22" height="21" viewBox="0 0 22 21"><path d="M3.5 0.5h11l4 4v15h-15z" fill="#f2f2f2" stroke="#999"/><text x="5" y="8" font-size="7" font-weight="bold" fill="#666" font-family="Liberation Sans">SQL</text><path d="M0.5 10.5h5l1 2h5v7h-11z" fill="#8fb6d6" stroke="#5a86aa"/></svg>
<svg class="a" style="left:70px;top:80px" width="24" height="21" viewBox="0 0 24 21"><ellipse cx="14" cy="4" rx="8" ry="3.5" fill="#f7e08a" stroke="#c9a83a"/><path d="M6 4v13c0 2 3.5 3.5 8 3.5s8-1.5 8-3.5V4" fill="#f0d26a" stroke="#c9a83a"/><path d="M6 10.5c0 2 3.5 3.5 8 3.5s8-1.5 8-3.5" fill="none" stroke="#c9a83a"/><circle cx="5" cy="15" r="5" fill="#555" stroke="#333" stroke-width="0.8"/><path d="M2 15h6M5 12v6" stroke="#eee" stroke-width="2"/></svg>
<svg class="a" style="left:102px;top:80px" width="22" height="21" viewBox="0 0 22 21"><rect x="3.5" y="0.5" width="17" height="17" fill="#e8eef8" stroke="#5577aa"/><rect x="3.5" y="0.5" width="17" height="3" fill="#5a80c0"/><path d="M6 6h3M10 6h4M15 6h4" stroke="#6a88b8" stroke-width="1.2"/><path d="M6 9h3M10 9h4M15 9h4" stroke="#6a88b8" stroke-width="1.2"/><path d="M6 12h3M10 12h4M15 12h4" stroke="#6a88b8" stroke-width="1.2"/><path d="M6 15h3M10 15h4M15 15h4" stroke="#6a88b8" stroke-width="1.2"/><circle cx="5" cy="15" r="5" fill="#555" stroke="#333" stroke-width="0.8"/><path d="M2 15h6M5 12v6" stroke="#eee" stroke-width="2"/></svg>
<svg class="a" style="left:132px;top:80px" width="22" height="21" viewBox="0 0 22 21"><rect x="3.5" y="0.5" width="17" height="17" fill="#e8eef8" stroke="#5577aa"/><rect x="3.5" y="0.5" width="17" height="3" fill="#5a80c0"/><rect x="7.5" y="5.5" width="7" height="6" fill="none" stroke="#5577aa"/><rect x="10.5" y="8.5" width="7" height="7" fill="#d6e2f6" stroke="#5577aa"/><circle cx="5" cy="15" r="5" fill="#555" stroke="#333" stroke-width="0.8"/><path d="M2 15h6M5 12v6" stroke="#eee" stroke-width="2"/></svg>
<svg class="a" style="left:162px;top:80px" width="22" height="21" viewBox="0 0 22 21"><rect x="3.5" y="0.5" width="17" height="17" fill="#e8eef8" stroke="#5577aa"/><rect x="3.5" y="0.5" width="17" height="3" fill="#5a80c0"/><rect x="7.5" y="5.5" width="3" height="3" fill="none" stroke="#1a3a9a" stroke-width="1.3"/><rect x="13.5" y="11.5" width="3" height="3" fill="none" stroke="#1a3a9a" stroke-width="1.3"/><path d="M15 4l2.5 2.5L15 9l-2.5-2.5z" fill="none" stroke="#d04040"/><circle cx="5" cy="15" r="5" fill="#555" stroke="#333" stroke-width="0.8"/><path d="M2 15h6M5 12v6" stroke="#eee" stroke-width="2"/></svg>
<svg class="a" style="left:194px;top:79px" width="24" height="22" viewBox="0 0 24 22"><circle cx="12" cy="10" r="8" fill="#3a4678"/><ellipse cx="10" cy="7" rx="4" ry="3" fill="#8a96c8" opacity=".7"/><path d="M2 15l5-4v2.5h4v3H7V19z" fill="#555" stroke="#333" stroke-width=".6"/><path d="M11 18l-2-3 4-3" fill="none" stroke="#666" stroke-width="2"/><rect x="14" y="8" width="8" height="10" rx="2" fill="#f2d870" stroke="#c9a83a"/><path d="M14 11c2 1 6 1 8 0M14 14c2 1 6 1 8 0" stroke="#c9a83a" fill="none" stroke-width=".7"/></svg>
<div class="a" style="left:65px;top:90px;width:1px;height:2px;background:#fff;"></div>
<div class="a" style="left:189px;top:90px;width:1px;height:2px;background:#fff;"></div>
<div class="a" style="left:1238px;top:76px;width:26px;height:29px;background:#c8c6c1;border-left:1px solid #111;border-bottom:1px solid #fff"></div>
<svg class="a" style="left:1243px;top:83px" width="16" height="13" viewBox="0 0 16 13"><defs><linearGradient id="lg0" x1="0" y1="0" x2="0" y2="1"><stop offset="0" stop-color="#fafbfd"/><stop offset="1" stop-color="#c8d0e0"/></linearGradient></defs><rect x="0.5" y="0.5" width="15" height="12" fill="url(#lg0)" stroke="#333"/><rect x="1" y="1" width="5" height="11" fill="#999"/></svg>
<div class="a" style="left:1266px;top:76px;width:26px;height:29px;background:#c8c6c1;border-left:1px solid #111;border-bottom:1px solid #fff"></div>
<svg class="a" style="left:1271px;top:83px" width="16" height="13" viewBox="0 0 16 13"><defs><linearGradient id="lg1" x1="0" y1="0" x2="0" y2="1"><stop offset="0" stop-color="#fafbfd"/><stop offset="1" stop-color="#c8d0e0"/></linearGradient></defs><rect x="0.5" y="0.5" width="15" height="12" fill="url(#lg1)" stroke="#333"/><rect x="1" y="9" width="14" height="3" fill="#999"/></svg>
<div class="a" style="left:1294px;top:76px;width:26px;height:29px;background:#c8c6c1;border-left:1px solid #111;border-bottom:1px solid #fff"></div>
<svg class="a" style="left:1299px;top:83px" width="16" height="13" viewBox="0 0 16 13"><defs><linearGradient id="lg2" x1="0" y1="0" x2="0" y2="1"><stop offset="0" stop-color="#fafbfd"/><stop offset="1" stop-color="#c8d0e0"/></linearGradient></defs><rect x="0.5" y="0.5" width="15" height="12" fill="url(#lg2)" stroke="#333"/><rect x="10" y="1" width="5" height="11" fill="#999"/></svg>
<div class="a" style="left:1236px;top:75px;width:88px;height:1px;background:#111;"></div>
<div class="t" style="left:10px;top:111px;font-size:11px;color:#5c6674;font-weight:700;letter-spacing:0.75px;line-height:11px;text-shadow:0 1px 0 #fff">SCHEMAS</div>
<svg class="a" style="left:235px;top:111px" width="14" height="12" viewBox="0 0 14 12"><path d="M1 6l5-5v3h2l2 2H6v3z" fill="#607488"/><path d="M13 6l-5 5V8H6L4 6h4V3z" fill="#607488"/><path d="M6 4.5h2M6 7.5h2" stroke="#e8eef4" stroke-width=".8"/></svg>
<div class="a" style="left:12px;top:137px;width:235px;height:21px;background:#fff;border:1px solid;border-color:#111 #fff #fff #111;border-width:2px 1px 1px 1px"></div>
<svg class="a" style="left:15px;top:139px" width="18" height="17" viewBox="0 0 18 17"><circle cx="7" cy="7" r="5" fill="#f4f4f4" stroke="#777" stroke-width="1.3"/><path d="M10.5 10.5l5 5" stroke="#555" stroke-width="2.6" stroke-linecap="round"/></svg>
<div class="a" style="left:3px;top:166px;width:252px;height:439px;background:#fff;"></div>
<svg class="a" style="left:4px;top:171px" width="12" height="8" viewBox="0 0 12 8"><path d="M1.5 1.5h9l-4.5 5z" fill="#fff" stroke="#111" stroke-width="1.2"/></svg>
<div class="a" style="left:6px;top:173px;width:8px;height:0;"></div>
<svg class="a" style="left:22px;top:168px" width="15" height="17" viewBox="0 0 15 17"><path d="M1.5 3.5v10c0 1.5 2.5 2.5 6 2.5s6-1 6-2.5v-10" fill="#d8d8d8" stroke="#888"/><ellipse cx="7.5" cy="3.5" rx="6" ry="2.5" fill="#eee" stroke="#888"/><path d="M1.5 7.5c0 1.5 2.5 2.5 6 2.5s6-1 6-2.5M1.5 11c0 1.5 2.5 2.5 6 2.5s6-1 6-2.5" fill="none" stroke="#999"/></svg>
<div class="t" style="left:41px;top:170px;font-size:13px;color:#111;font-weight:700;letter-spacing:0.5px;line-height:13px;">db_and_xml</div>
<svg class="a" style="left:20px;top:193px" width="12" height="8" viewBox="0 0 12 8"><path d="M1.5 1.5h9l-4.5 5z" fill="#fff" stroke="#111" stroke-width="1.2"/></svg>
<svg class="a" style="left:37px;top:190px" width="18" height="15" viewBox="0 0 18 15"><rect x="0.5" y="0.5" width="10" height="8" fill="#e6e9ee" stroke="#8a94a4"/><rect x="4.5" y="3.5" width="10" height="8" fill="#e6e9ee" stroke="#8a94a4"/><rect x="7.5" y="6.5" width="9" height="8" fill="#d0d6de" stroke="#8a94a4"/></svg>
<div class="t" style="left:57px;top:192px;font-size:13px;color:#111;line-height:13px;">Tables</div>
<svg class="a" style="left:39px;top:214px" width="8" height="12" viewBox="0 0 8 12"><path d="M1.5 1.5v9l5-4.5z" fill="#fff" stroke="#111" stroke-width="1.2"/></svg>
<svg class="a" style="left:54px;top:213px" width="13" height="14" viewBox="0 0 13 14"><rect x="0.5" y="0.5" width="12" height="13" fill="#f2f4f8" stroke="#8c96a6"/><rect x="1" y="1" width="11" height="2" fill="#a8b0bc"/><path d="M2 4.5h9" stroke="#8a98ac"/><path d="M2 6.5h9" stroke="#8a98ac"/><path d="M2 8.5h9" stroke="#8a98ac"/><path d="M2 10.5h9" stroke="#8a98ac"/><path d="M2 12.5h9" stroke="#8a98ac"/><path d="M4.5 3v10M8.5 3v10" stroke="#fff" stroke-width="0.8"/></svg>
<div class="t" style="left:73px;top:214px;font-size:13px;color:#111;line-height:13px;">clients</div>
<svg class="a" style="left:39px;top:236px" width="8" height="12" viewBox="0 0 8 12"><path d="M1.5 1.5v9l5-4.5z" fill="#fff" stroke="#111" stroke-width="1.2"/></svg>
<svg class="a" style="left:54px;top:235px" width="13" height="14" viewBox="0 0 13 14"><rect x="0.5" y="0.5" width="12" height="13" fill="#f2f4f8" stroke="#8c96a6"/><rect x="1" y="1" width="11" height="2" fill="#a8b0bc"/><path d="M2 4.5h9" stroke="#8a98ac"/><path d="M2 6.5h9" stroke="#8a98ac"/><path d="M2 8.5h9" stroke="#8a98ac"/><path d="M2 10.5h9" stroke="#8a98ac"/><path d="M2 12.5h9" stroke="#8a98ac"/><path d="M4.5 3v10M8.5 3v10" stroke="#fff" stroke-width="0.8"/></svg>
<div class="t" style="left:73px;top:236px;font-size:13px;color:#111;line-height:13px;">items</div>
<svg class="a" style="left:39px;top:258px" width="8" height="12" viewBox="0 0 8 12"><path d="M1.5 1.5v9l5-4.5z" fill="#fff" stroke="#111" stroke-width="1.2"/></svg>
<svg class="a" style="left:54px;top:257px" width="13" height="14" viewBox="0 0 13 14"><rect x="0.5" y="0.5" width="12" height="13" fill="#f2f4f8" stroke="#8c96a6"/><rect x="1" y="1" width="11" height="2" fill="#a8b0bc"/><path d="M2 4.5h9" stroke="#8a98ac"/><path d="M2 6.5h9" stroke="#8a98ac"/><path d="M2 8.5h9" stroke="#8a98ac"/><path d="M2 10.5h9" stroke="#8a98ac"/><path d="M2 12.5h9" stroke="#8a98ac"/><path d="M4.5 3v10M8.5 3v10" stroke="#fff" stroke-width="0.8"/></svg>
<div class="t" style="left:73px;top:258px;font-size:13px;color:#111;line-height:13px;">orderItems</div>
<svg class="a" style="left:39px;top:280px" width="8" height="12" viewBox="0 0 8 12"><path d="M1.5 1.5v9l5-4.5z" fill="#fff" stroke="#111" stroke-width="1.2"/></svg>
<svg class="a" style="left:54px;top:279px" width="13" height="14" viewBox="0 0 13 14"><rect x="0.5" y="0.5" width="12" height="13" fill="#f2f4f8" stroke="#8c96a6"/><rect x="1" y="1" width="11" height="2" fill="#a8b0bc"/><path d="M2 4.5h9" stroke="#8a98ac"/><path d="M2 6.5h9" stroke="#8a98ac"/><path d="M2 8.5h9" stroke="#8a98ac"/><path d="M2 10.5h9" stroke="#8a98ac"/><path d="M2 12.5h9" stroke="#8a98ac"/><path d="M4.5 3v10M8.5 3v10" stroke="#fff" stroke-width="0.8"/></svg>
<div class="t" style="left:73px;top:280px;font-size:13px;color:#111;line-height:13px;">orders</div>
<svg class="a" style="left:37px;top:300px" width="18" height="15" viewBox="0 0 18 15"><rect x="0.5" y="0.5" width="10" height="8" fill="#e6e9ee" stroke="#8a94a4"/><rect x="4.5" y="3.5" width="10" height="8" fill="#e6e9ee" stroke="#8a94a4"/><rect x="7.5" y="6.5" width="9" height="8" fill="#d0d6de" stroke="#8a94a4"/></svg>
<div class="t" style="left:56px;top:302px;font-size:13px;color:#111;line-height:13px;">Views</div>
<svg class="a" style="left:37px;top:322px" width="18" height="15" viewBox="0 0 18 15"><rect x="0.5" y="0.5" width="10" height="8" fill="#e6e9ee" stroke="#8a94a4"/><rect x="4.5" y="3.5" width="10" height="8" fill="#e6e9ee" stroke="#8a94a4"/><rect x="7.5" y="6.5" width="9" height="8" fill="#d0d6de" stroke="#8a94a4"/></svg>
<div class="t" style="left:57px;top:324px;font-size:13px;color:#111;line-height:13px;">Routines</div>
<div class="a" style="left:116px;top:606px;width:2px;height:2px;background:#333;"></div>
<div class="a" style="left:120px;top:606px;width:2px;height:2px;background:#333;"></div>
<div class="a" style="left:124px;top:606px;width:2px;height:2px;background:#333;"></div>
<div class="a" style="left:128px;top:606px;width:2px;height:2px;background:#333;"></div>
<div class="a" style="left:132px;top:606px;width:2px;height:2px;background:#333;"></div>
<div class="a" style="left:136px;top:606px;width:2px;height:2px;background:#333;"></div>
<div class="a" style="left:140px;top:606px;width:2px;height:2px;background:#333;"></div>
<div class="a" style="left:144px;top:606px;width:2px;height:2px;background:#333;"></div>
<div class="a" style="left:82px;top:612px;width:59px;height:22px;background:#c8c6c1;border-top:1px solid #fff;border-right:1px solid #111"></div>
<div class="a" style="left:3px;top:610px;width:79px;height:24px;background:#dcdad5;border-top:1px solid #fff;border-left:1px solid #fff;border-right:1px solid #111"></div>
<div class="t" style="left:9px;top:616px;font-size:13px;color:#111;line-height:13px;">Object Info</div>
<div class="t" style="left:86px;top:617px;font-size:13px;color:#111;line-height:13px;">Session</div>
<div class="a" style="left:3px;top:634px;width:252px;height:206px;background:#dcdad5;border:1px solid;border-color:#fff #111 #111 #fff"></div>
<div class="a" style="left:4px;top:635px;width:231px;height:187px;background:#fff;"></div>
<div class="a" style="left:237px;top:636px;width:16px;height:184px;background:#cfcdc8;border:1px solid;border-color:#111 #fff #fff #111"></div>
<div class="a" style="left:238px;top:637px;width:14px;height:14px;background:#dcdad5;border:1px solid;border-color:#fff #111 #111 #fff;"></div>
<div class="a" style="left:241px;top:642px;width:0;height:0;border-left:4px solid transparent;border-right:4px solid transparent;border-bottom:4px solid #888;"></div>
<div class="a" style="left:238px;top:805px;width:14px;height:14px;background:#dcdad5;border:1px solid;border-color:#fff #111 #111 #fff;"></div>
<div class="a" style="left:241px;top:810px;width:0;height:0;border-left:4px solid transparent;border-right:4px solid transparent;border-top:4px solid #888;"></div>
<div class="a" style="left:238px;top:651px;width:14px;height:154px;background:#dcdad5;border:1px solid;border-color:#fff #111 #111 #fff;"></div>
<div class="a" style="left:5px;top:824px;width:229px;height:15px;background:#cfcdc8;border:1px solid;border-color:#111 #fff #fff #111"></div>
<div class="a" style="left:6px;top:825px;width:14px;height:13px;background:#dcdad5;border:1px solid;border-color:#fff #111 #111 #fff;"></div>
<div class="a" style="left:10px;top:827px;width:0;height:0;border-top:4px solid transparent;border-bottom:4px solid transparent;border-right:4px solid #888;"></div>
<div class="a" style="left:219px;top:825px;width:14px;height:13px;background:#dcdad5;border:1px solid;border-color:#fff #111 #111 #fff;"></div>
<div class="a" style="left:224px;top:827px;width:0;height:0;border-top:4px solid transparent;border-bottom:4px solid transparent;border-left:4px solid #888;"></div>
<div class="a" style="left:20px;top:825px;width:199px;height:13px;background:#dcdad5;border:1px solid;border-color:#fff #111 #111 #fff;"></div>
<div class="t" style="left:5px;top:636px;font-size:13px;color:#111;line-height:13px;">No object selected</div>
<div class="a" style="left:261px;top:108px;width:80px;height:21px;background:#c8c6c1;border:1px solid;border-color:#fff #c8c6c1 #fff #fff"></div>
<div class="t" style="left:265px;top:112px;font-size:13px;color:#111;letter-spacing:0.1px;line-height:13px;">SQL File 1</div>
<div class="t" style="left:328px;top:112px;font-size:13px;color:#111;line-height:13px;">×</div>
<div class="a" style="left:341px;top:106px;width:102px;height:23px;background:#dcdad5;border-top:1px solid #fff;border-left:1px solid #fff;border-right:1px solid #111"></div>
<div class="t" style="left:345px;top:111px;font-size:13px;color:#111;line-height:13px;">Table: orders</div>
<div class="t" style="left:428px;top:111px;font-size:13px;color:#111;line-height:13px;">×</div>
<div class="a" style="left:261px;top:129px;width:1049px;height:542px;background:#dcdad5;border:1px solid;border-color:#fff #111 #111 #fff"></div>
<div class="a" style="left:443px;top:129px;width:867px;height:1px;background:#fff;"></div>
<div class="a" style="left:1315px;top:129px;width:4px;height:542px;background:#f6f6f4;"></div>
<div class="a" style="left:1320px;top:129px;width:1px;height:542px;background:#333;"></div>
<div class="a" style="left:1322px;top:24px;width:2px;height:840px;background:#111;"></div>
<div class="a" style="left:1313px;top:373px;width:2px;height:2px;background:#222;"></div>
<div class="a" style="left:1313px;top:378px;width:2px;height:2px;background:#222;"></div>
<div class="a" style="left:1313px;top:383px;width:2px;height:2px;background:#222;"></div>
<div class="a" style="left:1313px;top:388px;width:2px;height:2px;background:#222;"></div>
<div class="a" style="left:1313px;top:393px;width:2px;height:2px;background:#222;"></div>
<div class="a" style="left:1313px;top:398px;width:2px;height:2px;background:#222;"></div>
<div class="a" style="left:1313px;top:403px;width:2px;height:2px;background:#222;"></div>
<svg class="a" style="left:283px;top:141px" width="50" height="50" viewBox="0 0 50 50"><rect x="1.5" y="1.5" width="38" height="36" fill="#dfe9f7" stroke="#3a6ab0" stroke-width="2"/><rect x="1" y="1" width="39" height="5" fill="#3a70c0"/><g stroke="#7f9ac6" stroke-width="1.6"><path d="M7 10h5M15 10h5M23 10h5"/><path d="M7 14h5M15 14h5M23 14h5"/><path d="M7 18h5M15 18h5M23 18h5"/><path d="M7 22h5M15 22h5M23 22h5"/><path d="M7 26h5M15 26h5M23 26h5"/><path d="M7 30h5M15 30h5M23 30h5"/></g><path d="M8 46l16-14" stroke="#c05a10" stroke-width="7" stroke-linecap="round"/><path d="M8 46l16-14" stroke="#f08a30" stroke-width="5" stroke-linecap="round"/><circle cx="9" cy="45" r="1.6" fill="#b04a00"/><path d="M22 34l8-8a6 6 0 1 0 8-7l-3 3-3-1-1-3 3-3a6 6 0 0 0-7 8l-8 8z" fill="#d8d8d8" stroke="#888"/></svg>
<div class="t" style="left:358px;top:147px;font-size:13px;color:#111;line-height:13px;">Name:</div>
<div class="a" style="left:406px;top:143px;width:463px;height:22px;background:#fff;border:1px solid;border-color:#111 #fff #fff #111;"></div>
<div class="a" style="left:410px;top:147px;width:42px;height:14px;background:#9c9a96;"></div>
<div class="t" style="left:410px;top:147px;font-size:13px;color:#f0f0f0;line-height:13px;">orders</div>
<div class="t" style="left:878px;top:147px;font-size:13px;color:#111;line-height:13px;">Schema:</div>
<div class="a" style="left:939px;top:141px;width:322px;height:26px;background:#dcdad5;border:1px solid;border-color:#fff #111 #111 #fff;"></div>
<div class="t" style="left:945px;top:147px;font-size:13px;color:#111;line-height:13px;">db_and_xml</div>
<div class="a" style="left:1240px;top:145px;width:1px;height:17px;background:#888;"></div>
<div class="a" style="left:1241px;top:145px;width:1px;height:17px;background:#fff;"></div>
<div class="a" style="left:1246px;top:152px;width:0;height:0;border-left:5px solid transparent;border-right:5px solid transparent;border-top:5px solid #111;"></div>
<div class="t" style="left:340px;top:181px;font-size:13px;color:#111;line-height:13px;">Collation:</div>
<div class="a" style="left:406px;top:175px;width:464px;height:26px;background:#dcdad5;border:1px solid;border-color:#fff #111 #111 #fff;"></div>
<div class="t" style="left:412px;top:181px;font-size:13px;color:#111;line-height:13px;">utf8 - default collation</div>
<div class="a" style="left:849px;top:179px;width:1px;height:17px;background:#888;"></div>
<div class="a" style="left:850px;top:179px;width:1px;height:17px;background:#fff;"></div>
<div class="a" style="left:855px;top:186px;width:0;height:0;border-left:5px solid transparent;border-right:5px solid transparent;border-top:5px solid #111;"></div>
<div class="t" style="left:881px;top:181px;font-size:13px;color:#111;line-height:13px;">Engine:</div>
<div class="a" style="left:939px;top:175px;width:322px;height:26px;background:#dcdad5;border:1px solid;border-color:#fff #111 #111 #fff;"></div>
<div class="t" style="left:945px;top:181px;font-size:13px;color:#111;line-height:13px;">MyISAM</div>
<div class="a" style="left:1240px;top:179px;width:1px;height:17px;background:#888;"></div>
<div class="a" style="left:1241px;top:179px;width:1px;height:17px;background:#fff;"></div>
<div class="a" style="left:1246px;top:186px;width:0;height:0;border-left:5px solid transparent;border-right:5px solid transparent;border-top:5px solid #111;"></div>
<svg class="a" style="left:1269px;top:145px" width="22" height="22" viewBox="0 0 22 22"><path d="M3 12l8-8 8 8M3 19l8-8 8 8" fill="none" stroke="#c6c4bf" stroke-width="3.5"/></svg>
<div class="t" style="left:340px;top:211px;font-size:13px;color:#111;line-height:13px;">Comment:</div>
<div class="a" style="left:406px;top:209px;width:836px;height:31px;background:#fff;border:1px solid;border-color:#111 #fff #fff #111;"></div>
<div class="a" style="left:1244px;top:209px;width:17px;height:31px;background:#cfcdc8;border:1px solid;border-color:#111 #fff #fff #111"></div>
<div class="a" style="left:1245px;top:210px;width:14px;height:14px;background:#dcdad5;border:1px solid;border-color:#fff #111 #111 #fff;"></div>
<div class="a" style="left:1248px;top:214px;width:0;height:0;border-left:4px solid transparent;border-right:4px solid transparent;border-bottom:4px solid #888;"></div>
<div class="a" style="left:1245px;top:224px;width:14px;height:14px;background:#dcdad5;border:1px solid;border-color:#fff #111 #111 #fff;"></div>
<div class="a" style="left:1248px;top:229px;width:0;height:0;border-left:4px solid transparent;border-right:4px solid transparent;border-top:4px solid #888;"></div>
<div class="a" style="left:406px;top:243px;width:836px;height:15px;background:#cfcdc8;border:1px solid;border-color:#a09e98 #fff #fff #a09e98"></div>
<div class="a" style="left:407px;top:244px;width:14px;height:13px;background:#dcdad5;border:1px solid;border-color:#fff #111 #111 #fff;"></div>
<div class="a" style="left:411px;top:246px;width:0;height:0;border-top:4px solid transparent;border-bottom:4px solid transparent;border-right:4px solid #888;"></div>
<div class="a" style="left:1227px;top:244px;width:14px;height:13px;background:#dcdad5;border:1px solid;border-color:#fff #111 #111 #fff;"></div>
<div class="a" style="left:1232px;top:246px;width:0;height:0;border-top:4px solid transparent;border-bottom:4px solid transparent;border-left:4px solid #888;"></div>
<div class="a" style="left:421px;top:244px;width:806px;height:13px;background:#dcdad5;border:1px solid;border-color:#fff #111 #111 #fff;"></div>
<div class="a" style="left:265px;top:268px;width:1040px;height:181px;background:#dcdad5;border:1px solid;border-color:#111 #111 #111 #111;border-width:1px 1px 0 1px"></div>
<div class="a" style="left:266px;top:269px;width:1038px;height:2px;background:#fff;"></div>
<div class="a" style="left:267px;top:271px;width:1017px;height:160px;background:#fff;"></div>
<div class="a" style="left:267px;top:271px;width:405px;height:24px;background:#dcdad5;border:1px solid;border-color:#fff #111 #111 #fff"></div>
<div class="t" style="left:271px;top:276px;font-size:13px;color:#111;line-height:13px;">Column Name</div>
<div class="a" style="left:672px;top:271px;width:202px;height:24px;background:#dcdad5;border:1px solid;border-color:#fff #111 #111 #fff"></div>
<div class="t" style="left:676px;top:276px;font-size:13px;color:#111;line-height:13px;">Datatype</div>
<div class="a" style="left:874px;top:271px;width:25px;height:24px;background:#dcdad5;border:1px solid;border-color:#fff #111 #111 #fff"></div>
<div class="t" style="left:878px;top:276px;font-size:13px;color:#111;line-height:13px;">PK</div>
<div class="a" style="left:899px;top:271px;width:27px;height:24px;background:#dcdad5;border:1px solid;border-color:#fff #111 #111 #fff"></div>
<div class="t" style="left:903px;top:276px;font-size:13px;color:#111;line-height:13px;">NN</div>
<div class="a" style="left:926px;top:271px;width:28px;height:24px;background:#dcdad5;border:1px solid;border-color:#fff #111 #111 #fff"></div>
<div class="t" style="left:930px;top:276px;font-size:13px;color:#111;line-height:13px;">UQ</div>
<div class="a" style="left:954px;top:271px;width:31px;height:24px;background:#dcdad5;border:1px solid;border-color:#fff #111 #111 #fff"></div>
<div class="t" style="left:958px;top:276px;font-size:13px;color:#111;line-height:13px;">BIN</div>
<div class="a" style="left:985px;top:271px;width:28px;height:24px;background:#dcdad5;border:1px solid;border-color:#fff #111 #111 #fff"></div>
<div class="t" style="left:989px;top:276px;font-size:13px;color:#111;line-height:13px;">UN</div>
<div class="a" style="left:1013px;top:271px;width:25px;height:24px;background:#dcdad5;border:1px solid;border-color:#fff #111 #111 #fff"></div>
<div class="t" style="left:1017px;top:276px;font-size:13px;color:#111;line-height:13px;">ZF</div>
<div class="a" style="left:1038px;top:271px;width:21px;height:24px;background:#dcdad5;border:1px solid;border-color:#fff #111 #111 #fff"></div>
<div class="t" style="left:1042px;top:276px;font-size:13px;color:#111;line-height:13px;">AI</div>
<div class="a" style="left:1059px;top:271px;width:225px;height:24px;background:#dcdad5;border:1px solid;border-color:#fff #111 #111 #fff"></div>
<div class="t" style="left:1063px;top:276px;font-size:13px;color:#111;line-height:13px;">Default</div>
<div class="a" style="left:1285px;top:271px;width:17px;height:157px;background:#cfcdc8;border:1px solid;border-color:#a09e98 #fff #fff #a09e98"></div>
<div class="a" style="left:1286px;top:272px;width:15px;height:14px;background:#dcdad5;border:1px solid;border-color:#fff #111 #111 #fff;"></div>
<div class="a" style="left:1288px;top:276px;width:0;height:0;border-left:4px solid transparent;border-right:4px solid transparent;border-bottom:4px solid #888;"></div>
<div class="a" style="left:1286px;top:413px;width:15px;height:14px;background:#dcdad5;border:1px solid;border-color:#fff #111 #111 #fff;"></div>
<div class="a" style="left:1288px;top:418px;width:0;height:0;border-left:4px solid transparent;border-right:4px solid transparent;border-top:4px solid #888;"></div>
<div class="a" style="left:1286px;top:286px;width:15px;height:127px;background:#dcdad5;border:1px solid;border-color:#fff #111 #111 #fff;"></div>
<div class="a" style="left:267px;top:431px;width:1016px;height:16px;background:#cfcdc8;border:1px solid;border-color:#a09e98 #fff #fff #a09e98"></div>
<div class="a" style="left:268px;top:432px;width:14px;height:14px;background:#dcdad5;border:1px solid;border-color:#fff #111 #111 #fff;"></div>
<div class="a" style="left:272px;top:435px;width:0;height:0;border-top:4px solid transparent;border-bottom:4px solid transparent;border-right:4px solid #888;"></div>
<div class="a" style="left:1268px;top:432px;width:14px;height:14px;background:#dcdad5;border:1px solid;border-color:#fff #111 #111 #fff;"></div>
<div class="a" style="left:1273px;top:435px;width:0;height:0;border-top:4px solid transparent;border-bottom:4px solid transparent;border-left:4px solid #888;"></div>
<div class="a" style="left:282px;top:432px;width:986px;height:14px;background:#dcdad5;border:1px solid;border-color:#fff #111 #111 #fff;"></div>
<svg class="a" style="left:271px;top:299px" width="8" height="12" viewBox="0 0 8 12"><circle cx="4" cy="3.5" r="3" fill="#f2c94c" stroke="#c89a20"/><path d="M4 6v5" stroke="#c89a20" stroke-width="2"/></svg>
<div class="t" style="left:285px;top:299px;font-size:13px;color:#111;line-height:13px;">id</div>
<div class="t" style="left:676px;top:299px;font-size:13px;color:#111;line-height:13px;">INT(11)</div>
<div class="a" style="left:880px;top:299px;width:13px;height:13px;background:#fff;border:1px solid #111"></div>
<svg class="a" style="left:882px;top:301px" width="9" height="9" viewBox="0 0 9 9"><path d="M1 5l2.5 2.5L8 1" fill="none" stroke="#111" stroke-width="1.1"/></svg>
<div class="a" style="left:906px;top:299px;width:13px;height:13px;background:#fff;border:1px solid #111"></div>
<svg class="a" style="left:908px;top:301px" width="9" height="9" viewBox="0 0 9 9"><path d="M1 5l2.5 2.5L8 1" fill="none" stroke="#111" stroke-width="1.1"/></svg>
<div class="a" style="left:934px;top:299px;width:13px;height:13px;background:#fff;border:1px solid #111"></div>
<div class="a" style="left:963px;top:299px;width:13px;height:13px;background:#fff;border:1px solid #111"></div>
<div class="a" style="left:992px;top:299px;width:13px;height:13px;background:#fff;border:1px solid #111"></div>
<div class="a" style="left:1019px;top:299px;width:13px;height:13px;background:#fff;border:1px solid #111"></div>
<div class="a" style="left:1043px;top:299px;width:13px;height:13px;background:#fff;border:1px solid #111"></div>
<svg class="a" style="left:1045px;top:301px" width="9" height="9" viewBox="0 0 9 9"><path d="M1 5l2.5 2.5L8 1" fill="none" stroke="#111" stroke-width="1.1"/></svg>
<svg class="a" style="left:270px;top:322px" width="10" height="10" viewBox="0 0 10 10"><path d="M5 1l4 4-4 4-4-4z" fill="#fff" stroke="#6ab0c8"/></svg>
<div class="t" style="left:285px;top:321px;font-size:13px;color:#111;line-height:13px;">date</div>
<div class="t" style="left:676px;top:321px;font-size:13px;color:#111;line-height:13px;">DATE</div>
<div class="a" style="left:880px;top:321px;width:13px;height:13px;background:#fff;border:1px solid #111"></div>
<div class="a" style="left:906px;top:321px;width:13px;height:13px;background:#fff;border:1px solid #111"></div>
<div class="a" style="left:934px;top:321px;width:13px;height:13px;background:#fff;border:1px solid #111"></div>
<div class="a" style="left:963px;top:321px;width:13px;height:13px;background:#fff;border:1px solid #111"></div>
<div class="a" style="left:992px;top:321px;width:13px;height:13px;background:#fff;border:1px solid #111"></div>
<div class="a" style="left:1019px;top:321px;width:13px;height:13px;background:#fff;border:1px solid #111"></div>
<div class="a" style="left:1043px;top:321px;width:13px;height:13px;background:#fff;border:1px solid #111"></div>
<div class="t" style="left:1064px;top:321px;font-size:13px;color:#111;line-height:13px;">NULL</div>
<svg class="a" style="left:270px;top:344px" width="10" height="10" viewBox="0 0 10 10"><path d="M5 1l4 4-4 4-4-4z" fill="#9ed8e8" stroke="#6ab0c8"/></svg>
<div class="t" style="left:285px;top:343px;font-size:13px;color:#111;line-height:13px;">clientId</div>
<div class="t" style="left:676px;top:343px;font-size:13px;color:#111;line-height:13px;">INT(11)</div>
<div class="a" style="left:880px;top:343px;width:13px;height:13px;background:#fff;border:1px solid #111"></div>
<div class="a" style="left:906px;top:343px;width:13px;height:13px;background:#fff;border:1px solid #111"></div>
<svg class="a" style="left:908px;top:345px" width="9" height="9" viewBox="0 0 9 9"><path d="M1 5l2.5 2.5L8 1" fill="none" stroke="#111" stroke-width="1.1"/></svg>
<div class="a" style="left:934px;top:343px;width:13px;height:13px;background:#fff;border:1px solid #111"></div>
<div class="a" style="left:963px;top:343px;width:13px;height:13px;background:#fff;border:1px solid #111"></div>
<div class="a" style="left:992px;top:343px;width:13px;height:13px;background:#fff;border:1px solid #111"></div>
<div class="a" style="left:1019px;top:343px;width:13px;height:13px;background:#fff;border:1px solid #111"></div>
<div class="a" style="left:1043px;top:343px;width:13px;height:13px;background:#fff;border:1px solid #111"></div>
<div class="a" style="left:880px;top:365px;width:13px;height:13px;background:#fff;border:1px solid #111"></div>
<div class="a" style="left:906px;top:365px;width:13px;height:13px;background:#fff;border:1px solid #111"></div>
<div class="a" style="left:934px;top:365px;width:13px;height:13px;background:#fff;border:1px solid #111"></div>
<div class="a" style="left:963px;top:365px;width:13px;height:13px;background:#fff;border:1px solid #111"></div>
<div class="a" style="left:992px;top:365px;width:13px;height:13px;background:#fff;border:1px solid #111"></div>
<div class="a" style="left:1019px;top:365px;width:13px;height:13px;background:#fff;border:1px solid #111"></div>
<div class="a" style="left:1043px;top:365px;width:13px;height:13px;background:#fff;border:1px solid #111"></div>
<div class="a" style="left:265px;top:447px;width:1040px;height:157px;background:#dcdad5;border-right:1px solid #111"></div>
<div class="a" style="left:265px;top:447px;width:1px;height:182px;background:#111;"></div>
<div class="t" style="left:277px;top:456px;font-size:13px;color:#111;line-height:13px;">Column Details</div>
<div class="t" style="left:278px;top:482px;font-size:13px;color:#111;line-height:13px;">Collation:</div>
<div class="a" style="left:347px;top:476px;width:947px;height:26px;background:#dcdad5;border:1px solid;border-color:#fff #111 #111 #fff;"></div>
<div class="t" style="left:353px;top:482px;font-size:13px;color:#9a9894;line-height:13px;">*Table Default*</div>
<div class="a" style="left:1273px;top:480px;width:1px;height:17px;background:#888;"></div>
<div class="a" style="left:1274px;top:480px;width:1px;height:17px;background:#fff;"></div>
<div class="a" style="left:1279px;top:487px;width:0;height:0;border-left:5px solid transparent;border-right:5px solid transparent;border-top:5px solid #888;"></div>
<div class="t" style="left:276px;top:508px;font-size:13px;color:#111;line-height:13px;">Comment:</div>
<div class="a" style="left:347px;top:508px;width:929px;height:68px;background:#edebe7;border:1px solid;border-color:#111 #fff #fff #111;"></div>
<div class="a" style="left:1277px;top:508px;width:17px;height:68px;background:#cfcdc8;border:1px solid;border-color:#a09e98 #fff #fff #a09e98"></div>
<div class="a" style="left:1278px;top:509px;width:15px;height:14px;background:#dcdad5;border:1px solid;border-color:#fff #111 #111 #fff;"></div>
<div class="a" style="left:1280px;top:513px;width:0;height:0;border-left:4px solid transparent;border-right:4px solid transparent;border-bottom:4px solid #888;"></div>
<div class="a" style="left:1278px;top:561px;width:15px;height:14px;background:#dcdad5;border:1px solid;border-color:#fff #111 #111 #fff;"></div>
<div class="a" style="left:1280px;top:566px;width:0;height:0;border-left:4px solid transparent;border-right:4px solid transparent;border-top:4px solid #888;"></div>
<div class="a" style="left:1278px;top:523px;width:15px;height:38px;background:#dcdad5;border:1px solid;border-color:#fff #111 #111 #fff;"></div>
<div class="a" style="left:347px;top:578px;width:929px;height:16px;background:#cfcdc8;border:1px solid;border-color:#a09e98 #fff #fff #a09e98"></div>
<div class="a" style="left:348px;top:579px;width:14px;height:14px;background:#dcdad5;border:1px solid;border-color:#fff #111 #111 #fff;"></div>
<div class="a" style="left:352px;top:582px;width:0;height:0;border-top:4px solid transparent;border-bottom:4px solid transparent;border-right:4px solid #888;"></div>
<div class="a" style="left:1261px;top:579px;width:14px;height:14px;background:#dcdad5;border:1px solid;border-color:#fff #111 #111 #fff;"></div>
<div class="a" style="left:1266px;top:582px;width:0;height:0;border-top:4px solid transparent;border-bottom:4px solid transparent;border-left:4px solid #888;"></div>
<div class="a" style="left:362px;top:579px;width:899px;height:14px;background:#dcdad5;border:1px solid;border-color:#fff #111 #111 #fff;"></div>
<div class="a" style="left:678px;top:603px;width:627px;height:1px;background:#111;"></div>
<div class="a" style="left:266px;top:603px;width:65px;height:26px;background:#dcdad5;border-right:1px solid #111;border-bottom:1px solid #111"></div>
<div class="t" style="left:272px;top:609px;font-size:13px;color:#111;line-height:13px;">Columns</div>
<div class="a" style="left:330px;top:604px;width:59px;height:23px;background:#c8c6c1;border:1px solid;border-color:#111 #111 #111 #fff"></div>
<div class="t" style="left:334px;top:608px;font-size:13px;color:#111;line-height:13px;">Indexes</div>
<div class="a" style="left:388px;top:604px;width:90px;height:23px;background:#c8c6c1;border:1px solid;border-color:#111 #111 #111 #fff"></div>
<div class="t" style="left:392px;top:608px;font-size:13px;color:#111;line-height:13px;">Foreign Keys</div>
<div class="a" style="left:477px;top:604px;width:62px;height:23px;background:#c8c6c1;border:1px solid;border-color:#111 #111 #111 #fff"></div>
<div class="t" style="left:481px;top:608px;font-size:13px;color:#111;line-height:13px;">Triggers</div>
<div class="a" style="left:538px;top:604px;width:83px;height:23px;background:#c8c6c1;border:1px solid;border-color:#111 #111 #111 #fff"></div>
<div class="t" style="left:542px;top:608px;font-size:13px;color:#111;line-height:13px;">Partitioning</div>
<div class="a" style="left:620px;top:604px;width:59px;height:23px;background:#c8c6c1;border:1px solid;border-color:#111 #111 #111 #fff"></div>
<div class="t" style="left:624px;top:608px;font-size:13px;color:#111;line-height:13px;">Options</div>
<div class="a" style="left:265px;top:447px;width:1px;height:183px;background:#111;"></div>
<div class="a" style="left:265px;top:630px;width:1041px;height:1px;background:#fff;"></div>
<div class="a" style="left:1044px;top:636px;width:85px;height:26px;background:#dcdad5;border:1px solid;border-color:#fff #111 #111 #fff;"></div>
<div class="t" style="left:1044px;top:643px;width:85px;text-align:center;line-height:13px">Apply</div>
<div class="a" style="left:1131px;top:636px;width:85px;height:26px;background:#dcdad5;border:1px solid;border-color:#fff #111 #111 #fff;"></div>
<div class="t" style="left:1131px;top:643px;width:85px;text-align:center;line-height:13px">Revert</div>
<div class="a" style="left:1220px;top:636px;width:85px;height:26px;background:#dcdad5;border:1px solid;border-color:#fff #111 #111 #fff;"></div>
<div class="t" style="left:1220px;top:643px;width:85px;text-align:center;line-height:13px">Close</div>
<div class="a" style="left:777px;top:674px;width:2px;height:2px;background:#222;"></div>
<div class="a" style="left:781px;top:674px;width:2px;height:2px;background:#222;"></div>
<div class="a" style="left:785px;top:674px;width:2px;height:2px;background:#222;"></div>
<div class="a" style="left:789px;top:674px;width:2px;height:2px;background:#222;"></div>
<div class="a" style="left:793px;top:674px;width:2px;height:2px;background:#222;"></div>
<div class="a" style="left:797px;top:674px;width:2px;height:2px;background:#222;"></div>
<div class="a" style="left:801px;top:674px;width:2px;height:2px;background:#222;"></div>
<div class="a" style="left:805px;top:674px;width:2px;height:2px;background:#222;"></div>
<div class="a" style="left:257px;top:460px;width:2px;height:2px;background:#222;"></div>
<div class="a" style="left:257px;top:465px;width:2px;height:2px;background:#222;"></div>
<div class="a" style="left:257px;top:470px;width:2px;height:2px;background:#222;"></div>
<div class="a" style="left:257px;top:475px;width:2px;height:2px;background:#222;"></div>
<div class="a" style="left:257px;top:480px;width:2px;height:2px;background:#222;"></div>
<div class="a" style="left:257px;top:485px;width:2px;height:2px;background:#222;"></div>
<div class="a" style="left:257px;top:490px;width:2px;height:2px;background:#222;"></div>
<div class="a" style="left:261px;top:678px;width:128px;height:25px;background:#dcdad5;border:1px solid;border-color:#fff #111 #111 #fff;"></div>
<div class="t" style="left:266px;top:683px;font-size:13px;color:#111;line-height:13px;">Action Output</div>
<div class="a" style="left:366px;top:682px;width:1px;height:16px;background:#888;"></div>
<div class="a" style="left:367px;top:682px;width:1px;height:16px;background:#fff;"></div>
<div class="a" style="left:371px;top:687px;width:0;height:0;border-left:5px solid transparent;border-right:5px solid transparent;border-top:5px solid #111;"></div>
<div class="a" style="left:261px;top:704px;width:1062px;height:135px;background:#dcdad5;border-top:1px solid #fff;border-left:1px solid #fff"></div>
<div class="a" style="left:262px;top:705px;width:30px;height:24px;background:#dcdad5;border:1px solid;border-color:#fff #111 #111 #fff"></div>
<div class="a" style="left:292px;top:705px;width:40px;height:24px;background:#dcdad5;border:1px solid;border-color:#fff #111 #111 #fff"></div>
<div class="a" style="left:332px;top:705px;width:80px;height:24px;background:#dcdad5;border:1px solid;border-color:#fff #111 #111 #fff"></div>
<div class="t" style="left:336px;top:710px;font-size:13px;color:#111;line-height:13px;">Time</div>
<div class="a" style="left:412px;top:705px;width:400px;height:24px;background:#dcdad5;border:1px solid;border-color:#fff #111 #111 #fff"></div>
<div class="t" style="left:416px;top:710px;font-size:13px;color:#111;line-height:13px;">Action</div>
<div class="a" style="left:812px;top:705px;width:511px;height:24px;background:#dcdad5;border:1px solid;border-color:#fff #111 #111 #fff"></div>
<div class="t" style="left:816px;top:710px;font-size:13px;color:#111;line-height:13px;">Message</div>
<div class="a" style="left:262px;top:729px;width:1061px;height:4px;background:#f4f3f1;"></div>
<div class="a" style="left:262px;top:733px;width:1061px;height:22px;background:#fff;"></div>
<svg class="a" style="left:264px;top:737px" width="13" height="13" viewBox="0 0 13 13"><circle cx="6.5" cy="6.5" r="5.5" fill="#2a9a2a" stroke="#1a6a1a"/><path d="M3.5 6.5l2.2 2.2L9.7 4.5" fill="none" stroke="#fff" stroke-width="1.8"/></svg>
<div class="t" style="left:296px;top:737px;font-size:13px;color:#111;line-height:13px;">3</div>
<div class="t" style="left:336px;top:737px;font-size:13px;color:#111;line-height:13px;">12:14:15</div>
<div class="t" style="left:416px;top:737px;font-size:13px;color:#111;line-height:13px;">Apply changes to orderItems</div>
<div class="t" style="left:816px;top:737px;font-size:13px;color:#111;line-height:13px;">Changes applied</div>
<div class="a" style="left:262px;top:755px;width:1061px;height:22px;background:#ececea;"></div>
<svg class="a" style="left:264px;top:759px" width="13" height="13" viewBox="0 0 13 13"><circle cx="6.5" cy="6.5" r="5.5" fill="#2a9a2a" stroke="#1a6a1a"/><path d="M3.5 6.5l2.2 2.2L9.7 4.5" fill="none" stroke="#fff" stroke-width="1.8"/></svg>
<div class="t" style="left:296px;top:759px;font-size:13px;color:#111;line-height:13px;">4</div>
<div class="t" style="left:336px;top:759px;font-size:13px;color:#111;line-height:13px;">12:16:41</div>
<div class="t" style="left:416px;top:759px;font-size:13px;color:#111;line-height:13px;">Apply changes to items</div>
<div class="t" style="left:816px;top:759px;font-size:13px;color:#111;line-height:13px;">Changes applied</div>
<div class="a" style="left:262px;top:777px;width:1061px;height:22px;background:#fff;"></div>
<svg class="a" style="left:264px;top:781px" width="13" height="13" viewBox="0 0 13 13"><circle cx="6.5" cy="6.5" r="5.5" fill="#2a9a2a" stroke="#1a6a1a"/><path d="M3.5 6.5l2.2 2.2L9.7 4.5" fill="none" stroke="#fff" stroke-width="1.8"/></svg>
<div class="t" style="left:296px;top:781px;font-size:13px;color:#111;line-height:13px;">5</div>
<div class="t" style="left:336px;top:781px;font-size:13px;color:#111;line-height:13px;">12:47:15</div>
<div class="t" style="left:416px;top:781px;font-size:13px;color:#111;line-height:13px;">Apply changes to orders</div>
<div class="t" style="left:816px;top:781px;font-size:13px;color:#111;line-height:13px;">Changes applied</div>
<div class="a" style="left:262px;top:799px;width:1061px;height:22px;background:#8e8c87;"></div>
<svg class="a" style="left:264px;top:803px" width="13" height="13" viewBox="0 0 13 13"><circle cx="6.5" cy="6.5" r="5.5" fill="#2a9a2a" stroke="#1a6a1a"/><path d="M3.5 6.5l2.2 2.2L9.7 4.5" fill="none" stroke="#fff" stroke-width="1.8"/></svg>
<div class="t" style="left:296px;top:803px;font-size:13px;color:#f2f2f2;line-height:13px;">6</div>
<div class="t" style="left:336px;top:803px;font-size:13px;color:#f2f2f2;line-height:13px;">12:47:21</div>
<div class="t" style="left:416px;top:803px;font-size:13px;color:#f2f2f2;line-height:13px;">Apply changes to orders</div>
<div class="t" style="left:816px;top:803px;font-size:13px;color:#f2f2f2;line-height:13px;">Changes applied</div>
<div class="a" style="left:262px;top:824px;width:1061px;height:15px;background:#cfcdc8;border:1px solid;border-color:#a09e98 #fff #fff #a09e98"></div>
<div class="a" style="left:263px;top:825px;width:14px;height:13px;background:#dcdad5;border:1px solid;border-color:#fff #111 #111 #fff;"></div>
<div class="a" style="left:267px;top:827px;width:0;height:0;border-top:4px solid transparent;border-bottom:4px solid transparent;border-right:4px solid #888;"></div>
<div class="a" style="left:1308px;top:825px;width:14px;height:13px;background:#dcdad5;border:1px solid;border-color:#fff #111 #111 #fff;"></div>
<div class="a" style="left:1313px;top:827px;width:0;height:0;border-top:4px solid transparent;border-bottom:4px solid transparent;border-left:4px solid #888;"></div>
<div class="a" style="left:277px;top:825px;width:1031px;height:13px;background:#dcdad5;border:1px solid;border-color:#fff #111 #111 #fff;"></div>
<div class="a" style="left:1px;top:839px;width:1323px;height:1px;background:#111;"></div>
<div class="a" style="left:1px;top:841px;width:1323px;height:1px;background:#111;"></div>
<div class="a" style="left:1px;top:843px;width:1323px;height:21px;background:#dcdad5;border-top:1px solid #111"></div>
<div class="t" style="left:3px;top:847px;font-size:13px;color:#111;line-height:13px;">SQL Editor Opened.</div>
<div class="a" style="left:1155px;top:844px;width:150px;height:19px;background:#c8c6c1;border-left:1px solid #fff"></div>
<svg class="a" style="left:1304px;top:845px" width="18" height="18" viewBox="0 0 18 18"><path d="M17 3L3 17M17 8L8 17M17 13L13 17" stroke="#fff" stroke-width="1"/><path d="M17 4L4 17M17 9L9 17M17 14L14 17" stroke="#999" stroke-width="1"/></svg>
<div class="a" style="left:0px;top:864px;width:1324px;height:6px;background:linear-gradient(#5a7aa2,#46658c);border-top:1px solid #0e1a2a;border-bottom:1px solid #0e1a2a"></div>
<div class="a" style="left:0px;top:870px;width:1378px;height:1px;background:#f0f0f0;"></div>
<div class="a" style="left:0px;top:871px;width:1324px;height:6px;background:linear-gradient(#5a7aa2,#46658c);border-bottom:1px solid #0e1a2a"></div>
<div class="a" style="left:0px;top:864px;width:1px;height:13px;background:#0e1a2a;"></div>
<div class="a" style="left:21px;top:864px;width:1px;height:6px;background:#0e1a2a;"></div>
<div class="a" style="left:21px;top:871px;width:1px;height:6px;background:#0e1a2a;"></div>
<div class="a" style="left:1302px;top:864px;width:1px;height:6px;background:#0e1a2a;"></div>
<div class="a" style="left:1300px;top:871px;width:1px;height:6px;background:#0e1a2a;"></div>
<div class="a" style="left:1323px;top:24px;width:55px;height:852px;background:#111;"></div>
<div class="a" style="left:1324px;top:25px;width:52px;height:21px;background:#3f5f86;"></div>
<svg class="a" style="left:1324px;top:25px" width="52" height="21" viewBox="0 0 52 21"><path d="M2 17h10" stroke="#5a7aa5"/><rect x="12.5" y="3.5" width="14" height="14" fill="none" stroke="#5a7aa5"/><path d="M32 3l14 14M46 3L32 17" stroke="#5a7aa5"/></svg>
<div class="a" style="left:1324px;top:47px;width:52px;height:25px;background:#dcdad5;"></div>
<div class="a" style="left:1324px;top:73px;width:52px;height:37px;background:#dcdad5;border-top:1px solid #fff"></div>
<div class="a" style="left:1324px;top:111px;width:52px;height:37px;background:#dcdad5;border-top:1px solid #fff"></div>
<div class="a" style="left:1324px;top:150px;width:36px;height:33px;background:#dcdad5;"></div>
<div class="a" style="left:1324px;top:183px;width:36px;height:651px;background:#a8a49c;"></div>
<div class="a" style="left:1360px;top:150px;width:16px;height:684px;background:#cfcdc8;"></div>
<div class="a" style="left:1361px;top:152px;width:14px;height:14px;background:#dcdad5;border:1px solid;border-color:#fff #111 #111 #fff;"></div>
<div class="a" style="left:1364px;top:157px;width:0;height:0;border-left:4px solid transparent;border-right:4px solid transparent;border-bottom:4px solid #111;"></div>
<div class="a" style="left:1376px;top:47px;width:1px;height:787px;background:#fff;"></div>
<div class="a" style="left:1324px;top:834px;width:36px;height:16px;background:#a8a49c;"></div>
<div class="a" style="left:1360px;top:834px;width:15px;height:14px;background:#dcdad5;border:1px solid;border-color:#fff #111 #111 #fff;"></div>
<div class="a" style="left:1363px;top:838px;width:0;height:0;border-left:4px solid transparent;border-right:4px solid transparent;border-top:4px solid #111;"></div>
<div class="a" style="left:1324px;top:853px;width:52px;height:18px;background:#dcdad5;"></div>
<div class="t" style="left:1327px;top:855px;font-size:13px;color:#111;line-height:13px;">en-US</div>
<div class="a" style="left:1323px;top:871px;width:55px;height:6px;background:linear-gradient(#5a7aa2,#46658c);border-bottom:1px solid #0e1a2a;border-right:1px solid #0e1a2a"></div>
<div class="a" style="left:1357px;top:871px;width:1px;height:6px;background:#0e1a2a;"></div>
<div class="a" style="left:837px;top:689px;width:559px;height:145px;background:#101a28;border:1px solid #0a0f18"></div>
<div class="a" style="left:838px;top:690px;width:557px;height:21px;background:#3f5f86;"></div>
<div class="a" style="left:840px;top:691px;width:18px;height:19px;background:#4f6f98;"></div>
<div class="a" style="left:845px;top:697px;width:6px;height:6px;background:#fff;"></div>
<div class="t" style="left:1010px;top:692px;font-size:16.5px;color:#d8dfe8;letter-spacing:0px;font-family:'Liberation Mono',monospace;line-height:16.5px;">kroyeren@Illana:~</div>
<svg class="a" style="left:1330px;top:691px" width="65" height="19" viewBox="0 0 65 19"><rect x="1" y="1" width="1" height="17" fill="#6a8ab5"/><path d="M5 16h15" stroke="#e0e8f0" stroke-width="2"/><rect x="25" y="2" width="15" height="15" fill="none" stroke="#e0e8f0" stroke-width="1.6"/><path d="M46 2l16 15M62 2L46 17" stroke="#e0e8f0" stroke-width="1.4"/></svg>
<div class="a" style="left:838px;top:711px;width:557px;height:118px;background:#111c2a;"></div>
<div class="a" style="left:1024px;top:713px;width:371px;height:54px;background:#262b34;"></div>
<div class="t" style="left:840px;top:715px;font-family:'Liberation Mono',monospace;font-size:12.5px;line-height:14px;letter-spacing:-0.5px"><span style="color:#f028f0;font-weight:700">nshot.jpg  2012-10-12-10-screenshot.png  2012-10-12-13-screenshot.jpg</span></div>
<div class="t" style="left:840px;top:729px;font-family:'Liberation Mono',monospace;font-size:12.5px;line-height:14px;letter-spacing:-0.5px"><span style="color:#f028f0;font-weight:700">2011-03-13-27-screenshot.png  2011-12-06-54-screenshot.jpg  2011-12-06-59-scree</span></div>
<div class="t" style="left:840px;top:743px;font-family:'Liberation Mono',monospace;font-size:12.5px;line-height:14px;letter-spacing:-0.5px"><span style="color:#f028f0;font-weight:700">nshot.png  2012-10-12-11-screenshot.jpg  2012-10-12-13-screenshot.png</span></div>
<div class="t" style="left:840px;top:757px;font-family:'Liberation Mono',monospace;font-size:12.5px;line-height:14px;letter-spacing:-0.5px"><span style="color:#f028f0;font-weight:700">2011-08-09-28-screenshot.jpg  2011-12-06-54-screenshot.png  2011-12-17-00-scree</span></div>
<div class="t" style="left:840px;top:771px;font-family:'Liberation Mono',monospace;font-size:12.5px;line-height:14px;letter-spacing:-0.5px"><span style="color:#f028f0;font-weight:700">nshot.jpg  2012-10-12-11-screenshot.png</span></div>
<div class="t" style="left:840px;top:785px;font-family:'Liberation Mono',monospace;font-size:12.5px;line-height:14px;letter-spacing:-0.5px"><span style="color:#38f038;font-weight:700">kroyeren@Illana</span><span style="color:#3050e0;font-weight:700"> ~ </span><span style="color:#3050e0;font-weight:700">$</span><span style="color:#d0d0d0;font-weight:400"> shoot</span></div>
<div class="t" style="left:840px;top:799px;font-family:'Liberation Mono',monospace;font-size:12.5px;line-height:14px;letter-spacing:-0.5px"><span style="color:#d0d0d0;font-weight:400">2012-10-12-12:43:22-screenshot.jpg 100%  248KB 248.1KB/s 248.1KB/s   00:00</span></div>
<div class="t" style="left:840px;top:813px;font-family:'Liberation Mono',monospace;font-size:12.5px;line-height:14px;letter-spacing:-0.5px"><span style="color:#38f038;font-weight:700">kroyeren@Illana</span><span style="color:#3050e0;font-weight:700"> ~ </span><span style="color:#3050e0;font-weight:700">$</span><span style="color:#d0d0d0;font-weight:400"> shoot</span></div>
<div class="a" style="left:1014px;top:812px;width:7px;height:14px;background:#30e030;"></div>
<div class="a" style="left:838px;top:829px;width:557px;height:4px;background:#6a8ab5;border-top:1px solid #a0c0e0"></div>
<div class="a" style="left:244px;top:876px;width:951px;height:24px;background:#2a3c54;"></div>
<div class="a" style="left:244px;top:877px;width:112px;height:23px;background:#3e5a7c;"></div>
<div class="a" style="left:356px;top:877px;width:44px;height:23px;background:#4a6688;"></div>
<div class="a" style="left:401px;top:877px;width:171px;height:23px;background:#3e5a7c;"></div>
<div class="a" style="left:573px;top:877px;width:171px;height:23px;background:#3e5a7c;"></div>
<div class="a" style="left:745px;top:877px;width:171px;height:23px;background:#3e5a7c;"></div>
<div class="a" style="left:917px;top:877px;width:86px;height:23px;background:#3e5a7c;"></div>
<div class="a" style="left:1004px;top:877px;width:191px;height:23px;background:#3e5a7c;"></div>
<div class="a" style="left:943px;top:878px;width:18px;height:21px;background:#d8d8d8;"></div>
<svg class="a" style="left:944px;top:879px" width="16" height="19" viewBox="0 0 16 19"><circle cx="8" cy="9.5" r="7" fill="#d01010"/><ellipse cx="8" cy="9.5" rx="3" ry="5" fill="#fff"/><ellipse cx="8" cy="9.5" rx="1.8" ry="4" fill="#d01010"/></svg>
<svg class="a" style="left:922px;top:880px" width="18" height="17" viewBox="0 0 18 17"><path d="M4 2l4 3-4 3-4-3zM12 2l4 3-4 3-4-3zM4 8l4 3-4 3-4-3zM12 8l4 3-4 3-4-3z" fill="#6aa8e0" transform="translate(1,0)"/><circle cx="13" cy="13" r="3.5" fill="#40b040"/></svg>
<div class="t" style="left:245px;top:881px;font-size:16.5px;color:#d4dbe6;letter-spacing:0px;font-family:'Liberation Mono',monospace;line-height:16.5px;">Workspace 4</div>
<div class="a" style="left:363px;top:884px;width:0;height:0;border-top:5px solid transparent;border-bottom:5px solid transparent;border-right:5px solid #e8eef8;"></div>
<div class="a" style="left:383px;top:884px;width:0;height:0;border-top:5px solid transparent;border-bottom:5px solid transparent;border-left:5px solid #e8eef8;"></div>
<svg class="a" style="left:404px;top:880px" width="18" height="18" viewBox="0 0 18 18"><rect x="0.5" y="0.5" width="17" height="17" fill="#e8f4fa" stroke="#8ac"/><path d="M4 4l4 2 3 6 3 2" fill="none" stroke="#567" stroke-width="1.2"/></svg>
<div class="t" style="left:426px;top:881px;font-size:16.5px;color:#d4dbe6;letter-spacing:0px;font-family:'Liberation Mono',monospace;line-height:16.5px;">MySQL Workbenc</div>
<div class="t" style="left:580px;top:881px;font-size:16.5px;color:#d4dbe6;letter-spacing:0px;font-family:'Liberation Mono',monospace;line-height:16.5px;">kroyeren@Illana:</div>
<svg class="a" style="left:750px;top:880px" width="20" height="18" viewBox="0 0 20 18"><path d="M2 16L10 2l6 12M6 10l10 6" fill="none" stroke="#9fb8d0" stroke-width="1.4"/><path d="M10 14l8-10" stroke="#50c050" stroke-width="1.6"/></svg>
<div class="t" style="left:772px;top:881px;font-size:16.5px;color:#d4dbe6;letter-spacing:0px;font-family:'Liberation Mono',monospace;line-height:16.5px;">*CRUD handin -</div>
<div class="a" style="left:966px;top:884px;width:0;height:0;border-top:5px solid transparent;border-bottom:5px solid transparent;border-right:5px solid #e8eef8;"></div>
<div class="a" style="left:988px;top:884px;width:0;height:0;border-top:5px solid transparent;border-bottom:5px solid transparent;border-left:5px solid #e8eef8;"></div>
<div class="t" style="left:1014px;top:881px;font-size:16.5px;color:#d4dbe6;letter-spacing:0px;font-family:'Liberation Mono',monospace;line-height:16.5px;">fre 12 okt 12:47</div>
</body></html>
